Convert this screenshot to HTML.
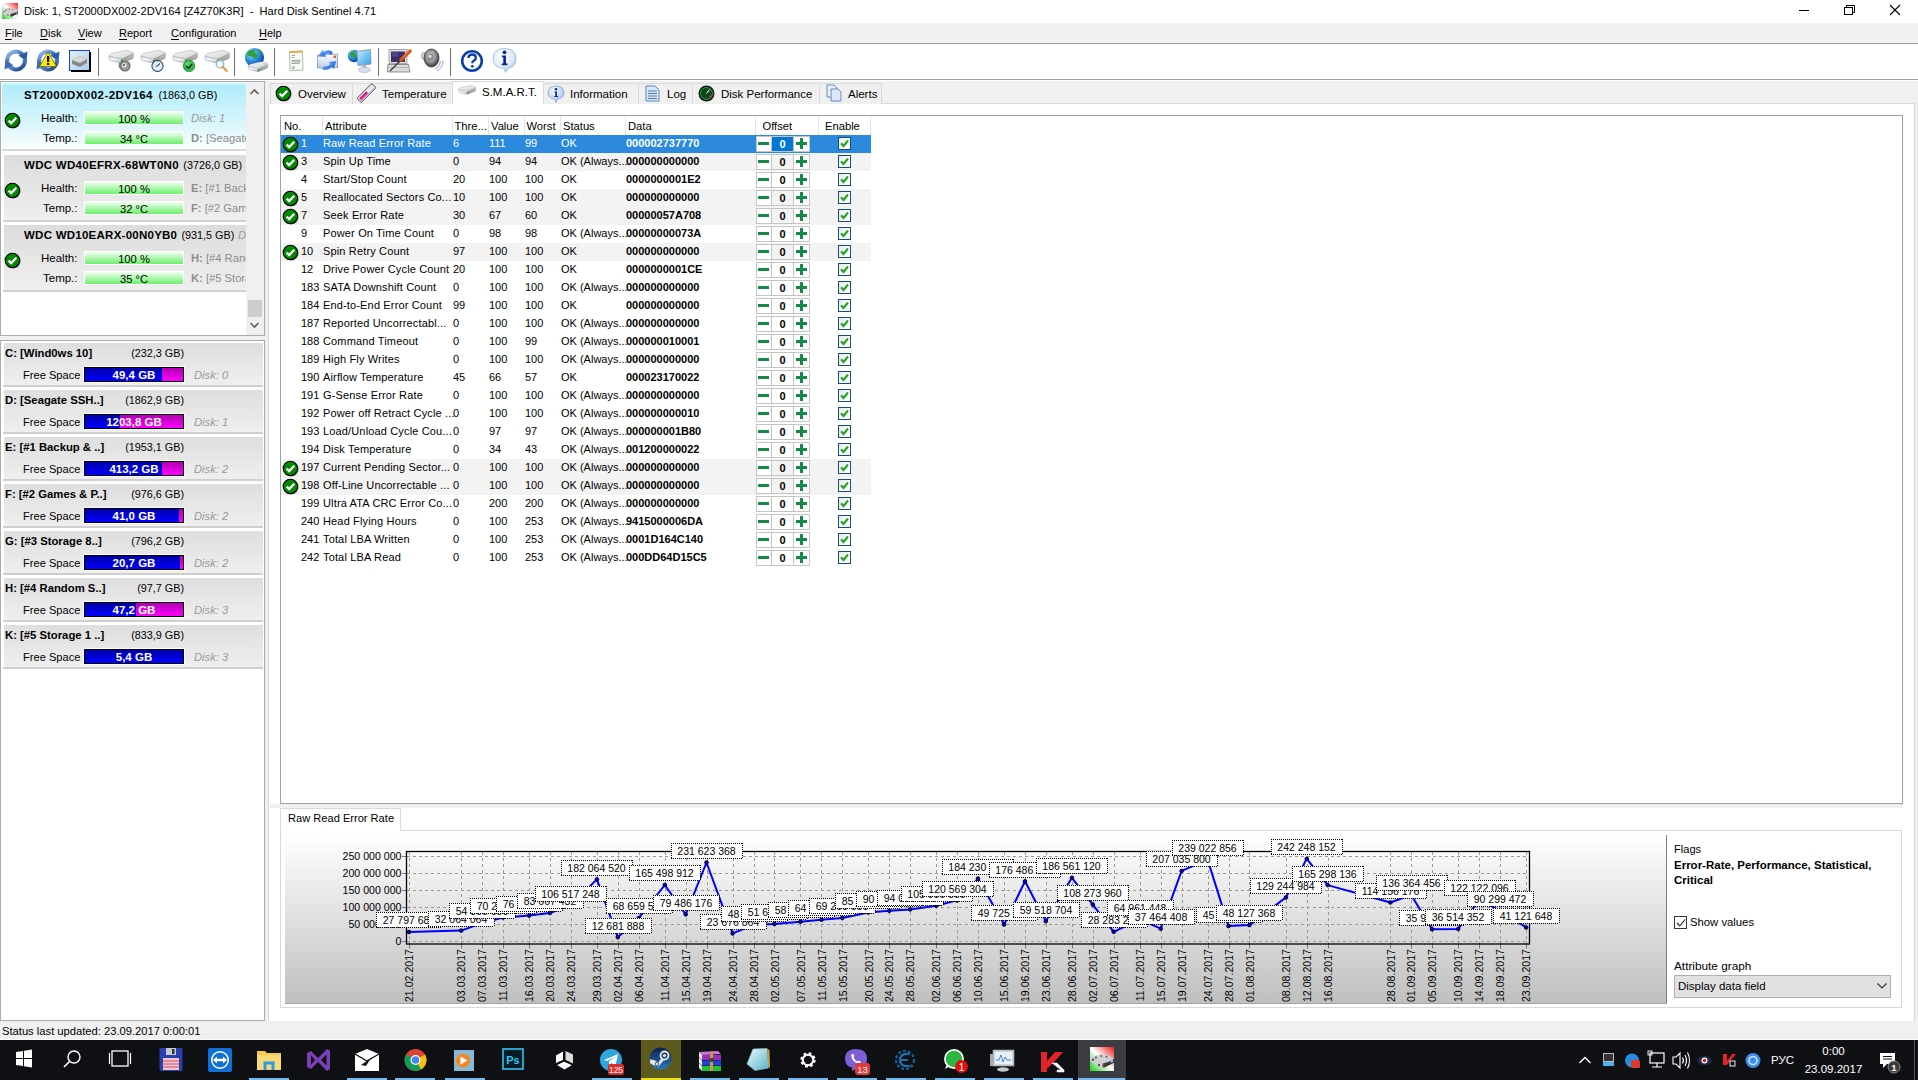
<!DOCTYPE html><html><head><meta charset="utf-8"><style>
html,body{margin:0;padding:0;width:1918px;height:1080px;overflow:hidden;background:#f0f0f0;font-family:'Liberation Sans', sans-serif;}
.t{position:absolute;white-space:pre;font-family:'Liberation Sans', sans-serif;}
.a{position:absolute;}
u{text-decoration:underline;text-underline-offset:2px}

</style></head><body>
<div style="position:absolute;left:0px;top:0px;width:1918px;height:23px;background:#fff"></div>
<svg class="a" style="left:2px;top:3px" width="16" height="16" viewBox="0 0 16 16">
<defs><linearGradient id="appg" x1="1" y1="0" x2="0" y2="1"><stop offset="0" stop-color="#f02020"/><stop offset="0.5" stop-color="#ffffff"/><stop offset="1" stop-color="#20d020"/></linearGradient></defs>
<rect x="0" y="0" width="16" height="16" fill="url(#appg)"/>
<path d="M0.5 7 L6 5 L12 5.5 L16 8 L16 10.5 L9 14 L6 13.5 L0.5 9.5 Z" fill="#d0d0d0"/><path d="M9 14 L16 10.5 L16 8 L12 10 L8.5 11 Z" fill="#3a3a3a"/><circle cx="14.5" cy="9.3" r="1" fill="#b0b0f0"/><g fill="#555"><circle cx="2" cy="8.5" r="0.8"/><circle cx="4" cy="7" r="0.7"/><circle cx="6" cy="12" r="0.8"/><circle cx="7.5" cy="6" r="0.6"/><circle cx="9" cy="12.5" r="0.9"/><circle cx="11" cy="6.5" r="0.6"/></g>
</svg>
<div class="t" style="left:24px;top:5px;font-size:11.1px;line-height:13px;font-weight:400;color:#000;">Disk: 1, ST2000DX002-2DV164 [Z4Z70K3R]  -  Hard Disk Sentinel 4.71</div>
<svg class="a" style="left:1790px;top:0" width="128" height="23">
<line x1="9" y1="10.5" x2="19" y2="10.5" stroke="#000" stroke-width="1"/>
<rect x="54.5" y="7.5" width="8" height="7" fill="none" stroke="#000"/>
<polyline points="56.5,7.5 56.5,5.5 64.5,5.5 64.5,12.5 62.5,12.5" fill="none" stroke="#000"/>
<line x1="100" y1="5" x2="110" y2="15" stroke="#000" stroke-width="1.1"/>
<line x1="110" y1="5" x2="100" y2="15" stroke="#000" stroke-width="1.1"/>
</svg>
<div style="position:absolute;left:0px;top:23px;width:1918px;height:20px;background:#f0f0f0"></div>
<div class="t" style="left:5px;top:27px;font-size:11px;line-height:13px;font-weight:400;color:#000;"><u>F</u>ile</div>
<div class="t" style="left:40px;top:27px;font-size:11px;line-height:13px;font-weight:400;color:#000;"><u>D</u>isk</div>
<div class="t" style="left:78px;top:27px;font-size:11px;line-height:13px;font-weight:400;color:#000;"><u>V</u>iew</div>
<div class="t" style="left:119px;top:27px;font-size:11px;line-height:13px;font-weight:400;color:#000;"><u>R</u>eport</div>
<div class="t" style="left:171px;top:27px;font-size:11px;line-height:13px;font-weight:400;color:#000;"><u>C</u>onfiguration</div>
<div class="t" style="left:259px;top:27px;font-size:11px;line-height:13px;font-weight:400;color:#000;"><u>H</u>elp</div>
<div style="position:absolute;left:0px;top:43px;width:1918px;height:1px;background:#a0a0a0"></div>
<div style="position:absolute;left:0px;top:44px;width:1918px;height:35px;background:#fff"></div>
<div style="position:absolute;left:0px;top:79px;width:1918px;height:1px;background:#a0a0a0"></div>
<div style="position:absolute;left:0px;top:80px;width:1918px;height:1px;background:#fff"></div>
<div style="position:absolute;left:98px;top:48px;width:1px;height:28px;background:#6e6e6e"></div>
<div style="position:absolute;left:234px;top:48px;width:1px;height:28px;background:#6e6e6e"></div>
<div style="position:absolute;left:274px;top:48px;width:1px;height:28px;background:#6e6e6e"></div>
<div style="position:absolute;left:378px;top:48px;width:1px;height:28px;background:#6e6e6e"></div>
<div style="position:absolute;left:450px;top:48px;width:1px;height:28px;background:#6e6e6e"></div>
<svg class="a" style="left:3px;top:47px" width="26" height="27" viewBox="0 0 26 27">
<defs><linearGradient id="rg16" x1="0" y1="0" x2="1" y2="1"><stop offset="0" stop-color="#a9c8ee"/><stop offset="0.5" stop-color="#4a7cc4"/><stop offset="1" stop-color="#163f86"/></linearGradient></defs>
<path d="M4.3 15 A8.8 8.8 0 0 1 19.5 7.5" fill="none" stroke="url(#rg16)" stroke-width="4.2"/>
<path d="M15.5 8.5 L24.5 4.5 L23.5 14.5 Z" fill="#2c5ea8"/>
<path d="M21.7 12 A8.8 8.8 0 0 1 6.5 19.5" fill="none" stroke="url(#rg16)" stroke-width="4.2"/>
<path d="M10.5 18.5 L1.5 22.5 L2.5 12.5 Z" fill="#3a6cb4"/>

</svg>
<svg class="a" style="left:35px;top:47px" width="26" height="27" viewBox="0 0 26 27">
<defs><linearGradient id="rg48" x1="0" y1="0" x2="1" y2="1"><stop offset="0" stop-color="#a9c8ee"/><stop offset="0.5" stop-color="#4a7cc4"/><stop offset="1" stop-color="#163f86"/></linearGradient></defs>
<path d="M4.3 15 A8.8 8.8 0 0 1 19.5 7.5" fill="none" stroke="url(#rg48)" stroke-width="4.2"/>
<path d="M15.5 8.5 L24.5 4.5 L23.5 14.5 Z" fill="#2c5ea8"/>
<path d="M21.7 12 A8.8 8.8 0 0 1 6.5 19.5" fill="none" stroke="url(#rg48)" stroke-width="4.2"/>
<path d="M10.5 18.5 L1.5 22.5 L2.5 12.5 Z" fill="#3a6cb4"/>
<path d="M13 5 L21.5 19.5 L4.5 19.5 Z" fill="#ffee00" stroke="#6a6a00" stroke-width="0.8"/><rect x="12" y="9" width="2.2" height="6" fill="#000"/><rect x="12" y="16" width="2.2" height="2" fill="#000"/>
</svg>
<svg class="a" style="left:69px;top:50px" width="23" height="23" viewBox="0 0 23 23">
<defs><linearGradient id="bb" x1="0" y1="0" x2="1" y2="1"><stop offset="0" stop-color="#e4f1fb"/><stop offset="1" stop-color="#a9cdec"/></linearGradient></defs>
<rect x="0.5" y="0.5" width="20" height="20" fill="url(#bb)" stroke="#1c3fe0" stroke-width="1"/>
<rect x="2" y="20" width="20" height="2" fill="#000"/><rect x="20" y="2" width="2" height="20" fill="#000"/>
<path d="M3 10 L10 6 L18 9 L18 13 L11 17 L3 14 Z" fill="#8a8a8a"/><path d="M3 10 L10 6 L18 9 L11 13 Z" fill="#d8d8d8"/>
</svg>
<svg class="a" style="left:0;top:0" width="0" height="0"><defs>
<linearGradient id="hddtop" x1="0" y1="0" x2="1" y2="1"><stop offset="0" stop-color="#fafafa"/><stop offset="1" stop-color="#cfcfcf"/></linearGradient>
<linearGradient id="hddfront" x1="0" y1="0" x2="0" y2="1"><stop offset="0" stop-color="#d8dae8"/><stop offset="0.5" stop-color="#f4f6ff"/><stop offset="1" stop-color="#a9abb8"/></linearGradient>
<linearGradient id="hddside" x1="0" y1="0" x2="0" y2="1"><stop offset="0" stop-color="#cfcfcf"/><stop offset="1" stop-color="#8c8c8c"/></linearGradient>
<radialGradient id="globeg" cx="0.35" cy="0.3" r="0.75"><stop offset="0" stop-color="#8fe0ff"/><stop offset="0.6" stop-color="#1f7fd8"/><stop offset="1" stop-color="#0a3f98"/></radialGradient>
</defs></svg>
<svg class="a" style="left:107px;top:47px" width="27" height="27" viewBox="0 0 27 27">
<g transform="translate(1 2) scale(1.0)"><path d="M1 7 Q1 5.5 3.5 4.8 L15 1.8 Q18 1.2 21 2 L24.5 3.5 Q25.5 4.3 24.5 5.2 L14.5 9.8 Q13 10.4 11 9.9 L2 7.6 Z" fill="url(#hddtop)" stroke="#9a9a9a" stroke-width="0.5"/><path d="M1 7 L11 9.9 Q13 10.4 14.5 9.8 L14.5 13.6 Q13 14.2 11 13.6 L2.2 11.2 Q1 10.6 1 9.6 Z" fill="url(#hddfront)" stroke="#9a9a9a" stroke-width="0.5"/><path d="M14.5 9.8 L24.5 5.2 Q25.5 4.5 25.3 4 L25.3 8.4 Q25.3 9.2 24.3 9.7 L14.5 13.6 Z" fill="url(#hddside)" stroke="#8a8a8a" stroke-width="0.5"/><rect x="12.8" y="10.6" width="1.6" height="2.6" fill="#16a016"/></g>
<circle cx="18" cy="19" r="5.6" fill="#6a6a6a"/><circle cx="18" cy="19" r="4.4" fill="#9a9a9a"/><circle cx="17.3" cy="18.3" r="2.2" fill="#e8e8e8"/><circle cx="17" cy="18" r="1" fill="#444"/><path d="M12.6 16 Q11.5 18.5 13 21" fill="none" stroke="#5a5ab0" stroke-width="1"/>
</svg>
<svg class="a" style="left:139px;top:47px" width="27" height="27" viewBox="0 0 27 27">
<g transform="translate(1 2) scale(1.0)"><path d="M1 7 Q1 5.5 3.5 4.8 L15 1.8 Q18 1.2 21 2 L24.5 3.5 Q25.5 4.3 24.5 5.2 L14.5 9.8 Q13 10.4 11 9.9 L2 7.6 Z" fill="url(#hddtop)" stroke="#9a9a9a" stroke-width="0.5"/><path d="M1 7 L11 9.9 Q13 10.4 14.5 9.8 L14.5 13.6 Q13 14.2 11 13.6 L2.2 11.2 Q1 10.6 1 9.6 Z" fill="url(#hddfront)" stroke="#9a9a9a" stroke-width="0.5"/><path d="M14.5 9.8 L24.5 5.2 Q25.5 4.5 25.3 4 L25.3 8.4 Q25.3 9.2 24.3 9.7 L14.5 13.6 Z" fill="url(#hddside)" stroke="#8a8a8a" stroke-width="0.5"/><rect x="12.8" y="10.6" width="1.6" height="2.6" fill="#16a016"/></g>
<circle cx="18.5" cy="19" r="5.6" fill="#dff2fb" stroke="#3a4a6a" stroke-width="1.1"/><g fill="#e08050"><rect x="18.2" y="14.2" width="0.8" height="1"/><rect x="22.4" y="18.6" width="1" height="0.8"/><rect x="13.6" y="18.6" width="1" height="0.8"/></g><path d="M18.5 19 L21 16.3" stroke="#2a2a5a" stroke-width="1.1"/><path d="M18.5 19 L16.8 19.6" stroke="#2a2a5a" stroke-width="0.9"/>
</svg>
<svg class="a" style="left:171px;top:47px" width="27" height="27" viewBox="0 0 27 27">
<g transform="translate(1 2) scale(1.0)"><path d="M1 7 Q1 5.5 3.5 4.8 L15 1.8 Q18 1.2 21 2 L24.5 3.5 Q25.5 4.3 24.5 5.2 L14.5 9.8 Q13 10.4 11 9.9 L2 7.6 Z" fill="url(#hddtop)" stroke="#9a9a9a" stroke-width="0.5"/><path d="M1 7 L11 9.9 Q13 10.4 14.5 9.8 L14.5 13.6 Q13 14.2 11 13.6 L2.2 11.2 Q1 10.6 1 9.6 Z" fill="url(#hddfront)" stroke="#9a9a9a" stroke-width="0.5"/><path d="M14.5 9.8 L24.5 5.2 Q25.5 4.5 25.3 4 L25.3 8.4 Q25.3 9.2 24.3 9.7 L14.5 13.6 Z" fill="url(#hddside)" stroke="#8a8a8a" stroke-width="0.5"/><rect x="12.8" y="10.6" width="1.6" height="2.6" fill="#16a016"/></g>
<circle cx="18" cy="19" r="5.8" fill="#2fb845" stroke="#1a7a2a" stroke-width="0.6"/><circle cx="17" cy="17.2" r="3" fill="#6fe07f" opacity="0.6"/><path d="M15.2 19 L17.4 21.2 L21 17" fill="none" stroke="#1c2a1c" stroke-width="1.5"/>
</svg>
<svg class="a" style="left:203px;top:47px" width="27" height="27" viewBox="0 0 27 27">
<g transform="translate(1 2) scale(1.0)"><path d="M1 7 Q1 5.5 3.5 4.8 L15 1.8 Q18 1.2 21 2 L24.5 3.5 Q25.5 4.3 24.5 5.2 L14.5 9.8 Q13 10.4 11 9.9 L2 7.6 Z" fill="url(#hddtop)" stroke="#9a9a9a" stroke-width="0.5"/><path d="M1 7 L11 9.9 Q13 10.4 14.5 9.8 L14.5 13.6 Q13 14.2 11 13.6 L2.2 11.2 Q1 10.6 1 9.6 Z" fill="url(#hddfront)" stroke="#9a9a9a" stroke-width="0.5"/><path d="M14.5 9.8 L24.5 5.2 Q25.5 4.5 25.3 4 L25.3 8.4 Q25.3 9.2 24.3 9.7 L14.5 13.6 Z" fill="url(#hddside)" stroke="#8a8a8a" stroke-width="0.5"/><rect x="12.8" y="10.6" width="1.6" height="2.6" fill="#16a016"/></g>
<circle cx="17" cy="17.2" r="3.8" fill="#e6f6ff" stroke="#8ab4d4" stroke-width="1.2"/><circle cx="16.2" cy="16.4" r="1.5" fill="#fff"/><line x1="19.6" y1="19.8" x2="23.8" y2="24" stroke="#e39a3a" stroke-width="2.2" stroke-linecap="round"/>
</svg>
<svg class="a" style="left:242px;top:47px" width="28" height="27" viewBox="0 0 28 27">
<circle cx="12.5" cy="10.5" r="9.6" fill="url(#globeg)"/>
<path d="M6 4.5 Q9.5 1.8 13 3 Q12 6 15 7 Q17 8.5 14.5 11 Q12 12.5 10.5 10 Q8 8.5 5.5 9 Q4.5 6.5 6 4.5 Z" fill="#2ea040"/>
<path d="M16 2.2 Q20 3.5 21.5 7.5 Q19.5 8 18.5 6 Q17 4.5 16 2.2 Z" fill="#2ea040"/>
<path d="M3.5 12 Q5.5 13 6 16 Q4.5 15 3.5 12 Z" fill="#2ea040"/>
<g transform="translate(5.5 13.5) scale(0.8)"><path d="M1 7 Q1 5.5 3.5 4.8 L15 1.8 Q18 1.2 21 2 L24.5 3.5 Q25.5 4.3 24.5 5.2 L14.5 9.8 Q13 10.4 11 9.9 L2 7.6 Z" fill="url(#hddtop)" stroke="#9a9a9a" stroke-width="0.5"/><path d="M1 7 L11 9.9 Q13 10.4 14.5 9.8 L14.5 13.6 Q13 14.2 11 13.6 L2.2 11.2 Q1 10.6 1 9.6 Z" fill="url(#hddfront)" stroke="#9a9a9a" stroke-width="0.5"/><path d="M14.5 9.8 L24.5 5.2 Q25.5 4.5 25.3 4 L25.3 8.4 Q25.3 9.2 24.3 9.7 L14.5 13.6 Z" fill="url(#hddside)" stroke="#8a8a8a" stroke-width="0.5"/><rect x="12.8" y="10.6" width="1.6" height="2.6" fill="#16a016"/></g>
</svg>
<svg class="a" style="left:287px;top:49px" width="18" height="24" viewBox="0 0 18 24">
<path d="M2.5 3 L15.5 2.5 L16 21 L3 21.8 Z" fill="#fdfdf8" stroke="#8ab0a0" stroke-width="0.8"/>
<path d="M2.3 2 L15.8 1.5 L15.8 3.6 L2.3 4 Z" fill="#c8a040"/>
<g fill="#e8d080"><circle cx="4" cy="2.7" r="0.7"/><circle cx="6.5" cy="2.6" r="0.7"/><circle cx="9" cy="2.5" r="0.7"/><circle cx="11.5" cy="2.4" r="0.7"/><circle cx="14" cy="2.3" r="0.7"/></g>
<g stroke="#8a8a8a" stroke-width="0.8"><line x1="4.5" y1="6.5" x2="8" y2="6.4"/><line x1="4.5" y1="8.5" x2="7.5" y2="8.4"/><line x1="4.5" y1="11.5" x2="13.5" y2="11.2"/><line x1="4.5" y1="13" x2="13.5" y2="12.7"/><line x1="4.5" y1="14.5" x2="13" y2="14.2"/><line x1="4.5" y1="18" x2="8" y2="17.9"/><line x1="4.5" y1="19.5" x2="8" y2="19.4"/></g>
</svg>
<svg class="a" style="left:315px;top:48px" width="26" height="24" viewBox="0 0 26 24">
<defs><linearGradient id="envg" x1="0" y1="0" x2="0" y2="1"><stop offset="0" stop-color="#ffffff"/><stop offset="1" stop-color="#b8cde8"/></linearGradient>
<linearGradient id="arrg" x1="0" y1="0" x2="1" y2="1"><stop offset="0" stop-color="#7ab8ff"/><stop offset="1" stop-color="#0a50d8"/></linearGradient></defs>
<path d="M2.5 7 L22.5 6 L22.5 19.5 L2.5 20 Z" fill="url(#envg)" stroke="#7088b0" stroke-width="0.7"/>
<rect x="18.5" y="7.5" width="2.6" height="2.6" fill="#e0603a"/>
<path d="M18 4.5 Q14 0.5 9 4 L8 1.5 L3 8.5 L11 8.8 L10 6.5 Q13.5 4.5 16 7 Z" fill="url(#arrg)"/>
<path d="M7 21 Q12 24 17 18.5 L18.5 21 L21.5 13 L14 14 L15.5 16.2 Q12 19.5 9 18.2 Z" fill="url(#arrg)"/>
</svg>
<svg class="a" style="left:347px;top:48px" width="27" height="26" viewBox="0 0 27 26">
<circle cx="7" cy="8" r="6.2" fill="url(#globeg)"/>
<path d="M3 5 Q5.5 2.5 8 3.5 Q7.5 6 9.5 7 Q10 9 8 10 Q6 9 4.5 9.5 Q2.5 7.5 3 5 Z" fill="#2ea040"/>
<defs><linearGradient id="scrg" x1="0" y1="0" x2="1" y2="1"><stop offset="0" stop-color="#c8f0ff"/><stop offset="1" stop-color="#2aa0e8"/></linearGradient></defs>
<path d="M10 3.5 L23.5 1.5 L24 16 L11 17.5 Z" fill="url(#scrg)" stroke="#8890b8" stroke-width="0.9"/>
<path d="M15.5 17 L19 16.6 L19.5 20 L15.5 20.3 Z" fill="#b0b0d0"/>
<ellipse cx="17.5" cy="21.8" rx="6" ry="2.8" fill="#d8dcef" stroke="#a8acc8" stroke-width="0.6"/>
</svg>
<svg class="a" style="left:387px;top:48px" width="26" height="26" viewBox="0 0 26 26">
<rect x="2" y="1.5" width="18" height="14" fill="#e0e0e0" stroke="#888" stroke-width="0.7"/>
<rect x="4" y="3.5" width="14" height="10.5" fill="#3d2f6a"/>
<rect x="5" y="4.5" width="6" height="4" fill="#6a5aa0" opacity="0.6"/>
<path d="M1 16.5 L21.5 16.5 L23 24 L0.5 24 Z" fill="#dcdcdc" stroke="#666" stroke-width="0.7"/>
<line x1="2" y1="19.5" x2="21" y2="19.5" stroke="#999" stroke-width="0.6"/>
<line x1="3" y1="23" x2="14" y2="12" stroke="#333" stroke-width="1.3"/>
<line x1="14" y1="12" x2="23" y2="3" stroke="#d2561c" stroke-width="3.4" stroke-linecap="round"/>
<line x1="16" y1="9" x2="22" y2="3" stroke="#f08a50" stroke-width="1" />
</svg>
<svg class="a" style="left:420px;top:48px" width="24" height="24" viewBox="0 0 24 24">
<defs><radialGradient id="spk" cx="0.45" cy="0.4" r="0.6"><stop offset="0" stop-color="#e0e0e0"/><stop offset="0.5" stop-color="#9a9a9a"/><stop offset="1" stop-color="#3a3a3a"/></radialGradient></defs>
<ellipse cx="4" cy="8" rx="2.5" ry="3.5" fill="#dadaf0" stroke="#8080b8" stroke-width="0.7"/>
<ellipse cx="11.5" cy="10" rx="7.5" ry="9" fill="url(#spk)" stroke="#333" stroke-width="0.8"/>
<ellipse cx="10.5" cy="9" rx="3" ry="3.6" fill="#8a8a8a"/><ellipse cx="10" cy="8.3" rx="1.6" ry="1.9" fill="#d8d8d8"/>
<path d="M15 21 Q20 18 20.5 13" fill="none" stroke="#a8a8e0" stroke-width="1.2"/>
<path d="M16.5 23 Q23 20 23 12.5" fill="none" stroke="#b8b8e8" stroke-width="1.2"/>
</svg>
<svg class="a" style="left:460px;top:49px" width="24" height="24" viewBox="0 0 24 24">
<circle cx="12" cy="12" r="9.8" fill="#fff" stroke="#0b3fae" stroke-width="2.6"/>
<path d="M8.5 9 Q8.5 5.5 12.2 5.5 Q15.8 5.5 15.8 8.7 Q15.8 10.8 13.3 12 Q12.3 12.6 12.3 14.3" fill="none" stroke="#0b3fae" stroke-width="2.3"/>
<circle cx="12.3" cy="17.3" r="1.4" fill="#0b3fae"/>
</svg>
<svg class="a" style="left:491px;top:47px" width="27" height="27" viewBox="0 0 27 27">
<defs><radialGradient id="ib" cx="0.4" cy="0.3" r="0.8"><stop offset="0" stop-color="#ffffff"/><stop offset="0.6" stop-color="#dfeaf8"/><stop offset="1" stop-color="#8ab0e0"/></radialGradient></defs>
<path d="M13.5 1.5 Q25 1.5 25 12 Q25 20 17 21.5 L14.5 25.5 L13 21.5 Q2 20.5 2 12 Q2 1.5 13.5 1.5 Z" fill="url(#ib)" stroke="#9ab8dc" stroke-width="0.8"/>
<circle cx="13.5" cy="5.3" r="1.9" fill="#0a2a90"/>
<path d="M10.8 8.5 L15 8.5 L15 16.5 L16.5 16.5 L16.5 18.3 L10.8 18.3 L10.8 16.5 L12.3 16.5 L12.3 10.3 L10.8 10.3 Z" fill="#0a2a90"/>
</svg>
<div style="position:absolute;left:0px;top:1021px;width:1918px;height:19px;background:#f0f0f0"></div>
<div class="t" style="left:2px;top:1025px;font-size:11.2px;line-height:13px;font-weight:400;color:#000;">Status last updated: 23.09.2017 0:00:01</div>
<div style="position:absolute;left:0px;top:81px;width:265px;height:255px;background:#fff;box-sizing:border-box;border:1px solid #a9abb0"></div>
<div style="position:absolute;left:2px;top:83px;width:244px;height:68px;background:linear-gradient(#c8fbff 0px,#b2ecfb 3px,#def7fd 45px,#ffffff 68px)"></div>
<div style="position:absolute;left:2px;top:149px;width:244px;height:2px;background:#d8d8d8"></div>
<div class="a" style="left:2px;top:83px;width:244px;height:68px;overflow:hidden">
<div class="t" style="left:22px;top:6px;font-size:11.2px;line-height:13px;font-weight:400;color:#000;"><b style="letter-spacing:0.45px;font-size:11.5px">ST2000DX002-2DV164</b></div>
<div class="t" style="left:156.5px;top:6px;font-size:10.8px;line-height:13px;font-weight:400;color:#000;">(1863,0 GB)</div>
<div class="t" style="left:39px;top:29px;font-size:11.5px;line-height:13px;font-weight:400;color:#000;">Health:</div>
<div class="t" style="left:41px;top:49px;font-size:11.5px;line-height:13px;font-weight:400;color:#000;">Temp.:</div>
<div class="t" style="left:189px;top:29px;font-size:11.2px;line-height:13px;font-weight:400;color:#8c8c8c;"><i style="color:#9a9a9a">Disk: 1</i></div>
<div class="t" style="left:189px;top:49px;font-size:11.2px;line-height:13px;font-weight:400;color:#8c8c8c;"><b>D:</b> [Seagate SSH</div>
</div>
<div style="position:absolute;left:84px;top:111px;width:100px;height:14px;background:#fff"></div>
<div style="position:absolute;left:85px;top:112px;width:98px;height:12px;background:linear-gradient(#f2fff2,#6df06d)"></div>
<div class="t" style="left:84px;top:113px;font-size:11.2px;line-height:13px;font-weight:400;color:#000;width:100px;text-align:center">100 %</div>
<div style="position:absolute;left:84px;top:131px;width:100px;height:14px;background:#fff"></div>
<div style="position:absolute;left:85px;top:132px;width:98px;height:12px;background:linear-gradient(#f2fff2,#6df06d)"></div>
<div class="t" style="left:84px;top:133px;font-size:11.2px;line-height:13px;font-weight:400;color:#000;width:100px;text-align:center">34 °C</div>
<svg class="a" style="left:2.9000000000000004px;top:110.7px" width="19" height="19" viewBox="0 0 19 19">
<circle cx="10.4" cy="10.4" r="7.2" fill="#3a3a3a" opacity="0.55"/>
<circle cx="9.4" cy="9.4" r="7.2" fill="#008a00" stroke="#000" stroke-width="1.1"/>
<path d="M5.6 9.6 L8.2 12.1 L13.3 6.8" fill="none" stroke="#fff" stroke-width="2.3" stroke-linejoin="miter" stroke-linecap="butt"/>
</svg>
<div style="position:absolute;left:4px;top:155px;width:242px;height:65px;background:linear-gradient(#dcdcdc,#efefef)"></div>
<div style="position:absolute;left:3px;top:220px;width:243px;height:2px;background:#d0d0d0"></div>
<div class="a" style="left:2px;top:153px;width:244px;height:68px;overflow:hidden">
<div class="t" style="left:22px;top:6px;font-size:11.2px;line-height:13px;font-weight:400;color:#000;"><b style="letter-spacing:0.3px;font-size:11.5px">WDC WD40EFRX-68WT0N0</b></div>
<div class="t" style="left:181.3px;top:6px;font-size:10.8px;line-height:13px;font-weight:400;color:#000;">(3726,0 GB)</div>
<div class="t" style="left:39px;top:29px;font-size:11.5px;line-height:13px;font-weight:400;color:#000;">Health:</div>
<div class="t" style="left:41px;top:49px;font-size:11.5px;line-height:13px;font-weight:400;color:#000;">Temp.:</div>
<div class="t" style="left:189px;top:29px;font-size:11.2px;line-height:13px;font-weight:400;color:#8c8c8c;"><b>E:</b> [#1 Backup</div>
<div class="t" style="left:189px;top:49px;font-size:11.2px;line-height:13px;font-weight:400;color:#8c8c8c;"><b>F:</b> [#2 Games</div>
</div>
<div style="position:absolute;left:84px;top:181px;width:100px;height:14px;background:#fff"></div>
<div style="position:absolute;left:85px;top:182px;width:98px;height:12px;background:linear-gradient(#f2fff2,#6df06d)"></div>
<div class="t" style="left:84px;top:183px;font-size:11.2px;line-height:13px;font-weight:400;color:#000;width:100px;text-align:center">100 %</div>
<div style="position:absolute;left:84px;top:201px;width:100px;height:14px;background:#fff"></div>
<div style="position:absolute;left:85px;top:202px;width:98px;height:12px;background:linear-gradient(#f2fff2,#6df06d)"></div>
<div class="t" style="left:84px;top:203px;font-size:11.2px;line-height:13px;font-weight:400;color:#000;width:100px;text-align:center">32 °C</div>
<svg class="a" style="left:2.9000000000000004px;top:180.7px" width="19" height="19" viewBox="0 0 19 19">
<circle cx="10.4" cy="10.4" r="7.2" fill="#3a3a3a" opacity="0.55"/>
<circle cx="9.4" cy="9.4" r="7.2" fill="#008a00" stroke="#000" stroke-width="1.1"/>
<path d="M5.6 9.6 L8.2 12.1 L13.3 6.8" fill="none" stroke="#fff" stroke-width="2.3" stroke-linejoin="miter" stroke-linecap="butt"/>
</svg>
<div style="position:absolute;left:4px;top:225px;width:242px;height:65px;background:linear-gradient(#dcdcdc,#efefef)"></div>
<div style="position:absolute;left:3px;top:290px;width:243px;height:2px;background:#d0d0d0"></div>
<div class="a" style="left:2px;top:223px;width:244px;height:68px;overflow:hidden">
<div class="t" style="left:22px;top:6px;font-size:11.2px;line-height:13px;font-weight:400;color:#000;"><b style="letter-spacing:0.25px;font-size:11.5px">WDC WD10EARX-00N0YB0</b></div>
<div class="t" style="left:179.5px;top:6px;font-size:10.8px;line-height:13px;font-weight:400;color:#000;">(931,5 GB)</div>
<div class="t" style="left:236px;top:6px;font-size:11.2px;line-height:13px;font-weight:400;color:#9a9a9a;"><i>Disk: 3</i></div>
<div class="t" style="left:39px;top:29px;font-size:11.5px;line-height:13px;font-weight:400;color:#000;">Health:</div>
<div class="t" style="left:41px;top:49px;font-size:11.5px;line-height:13px;font-weight:400;color:#000;">Temp.:</div>
<div class="t" style="left:189px;top:29px;font-size:11.2px;line-height:13px;font-weight:400;color:#8c8c8c;"><b>H:</b> [#4 Random</div>
<div class="t" style="left:189px;top:49px;font-size:11.2px;line-height:13px;font-weight:400;color:#8c8c8c;"><b>K:</b> [#5 Storage</div>
</div>
<div style="position:absolute;left:84px;top:251px;width:100px;height:14px;background:#fff"></div>
<div style="position:absolute;left:85px;top:252px;width:98px;height:12px;background:linear-gradient(#f2fff2,#6df06d)"></div>
<div class="t" style="left:84px;top:253px;font-size:11.2px;line-height:13px;font-weight:400;color:#000;width:100px;text-align:center">100 %</div>
<div style="position:absolute;left:84px;top:271px;width:100px;height:14px;background:#fff"></div>
<div style="position:absolute;left:85px;top:272px;width:98px;height:12px;background:linear-gradient(#f2fff2,#6df06d)"></div>
<div class="t" style="left:84px;top:273px;font-size:11.2px;line-height:13px;font-weight:400;color:#000;width:100px;text-align:center">35 °C</div>
<svg class="a" style="left:2.9000000000000004px;top:250.7px" width="19" height="19" viewBox="0 0 19 19">
<circle cx="10.4" cy="10.4" r="7.2" fill="#3a3a3a" opacity="0.55"/>
<circle cx="9.4" cy="9.4" r="7.2" fill="#008a00" stroke="#000" stroke-width="1.1"/>
<path d="M5.6 9.6 L8.2 12.1 L13.3 6.8" fill="none" stroke="#fff" stroke-width="2.3" stroke-linejoin="miter" stroke-linecap="butt"/>
</svg>
<div style="position:absolute;left:246px;top:82px;width:18px;height:253px;background:#f0f0f0"></div>
<svg class="a" style="left:246px;top:82px" width="18" height="253">
<polyline points="4.5,12 8.5,8 12.5,12" fill="none" stroke="#606060" stroke-width="1.6"/>
<polyline points="4.5,241 8.5,245 12.5,241" fill="none" stroke="#606060" stroke-width="1.6"/>
</svg>
<div style="position:absolute;left:248px;top:300px;width:14px;height:17px;background:#cdcdcd"></div>
<div style="position:absolute;left:0px;top:340px;width:265px;height:681px;background:#fff;box-sizing:border-box;border:1px solid #a9abb0"></div>
<div style="position:absolute;left:4px;top:343px;width:259px;height:42px;background:linear-gradient(#dedede,#efefef)"></div>
<div style="position:absolute;left:3px;top:385px;width:260px;height:2px;background:#cfcfcf"></div>
<div class="t" style="left:5px;top:347px;font-size:11.3px;line-height:13px;font-weight:700;color:#000;">C: [Wind0ws 10]</div>
<div class="t" style="left:84px;top:347px;font-size:10.8px;line-height:13px;font-weight:400;color:#000;width:100px;text-align:right">(232,3 GB)</div>
<div class="t" style="left:23px;top:369px;font-size:11.1px;line-height:13px;font-weight:400;color:#000;">Free Space</div>
<div style="position:absolute;left:83px;top:366px;width:102px;height:17px;background:#fbfbfb"></div>
<div style="position:absolute;left:84px;top:367px;width:100px;height:15px;background:#000"></div>
<div style="position:absolute;left:85px;top:368px;width:77px;height:13px;background:linear-gradient(#0000a8,#0000ff)"></div>
<div style="position:absolute;left:162px;top:368px;width:21px;height:13px;background:linear-gradient(#b000b0,#ff00ff)"></div>
<div class="t" style="left:84px;top:368px;font-size:11.5px;line-height:13px;font-weight:700;color:#fff;width:100px;text-align:center;line-height:14px">49,4 GB</div>
<div class="t" style="left:194px;top:369px;font-size:11.2px;line-height:13px;font-weight:400;color:#9a9a9a;"><i>Disk: 0</i></div>
<div style="position:absolute;left:4px;top:390px;width:259px;height:42px;background:linear-gradient(#dedede,#efefef)"></div>
<div style="position:absolute;left:3px;top:432px;width:260px;height:2px;background:#cfcfcf"></div>
<div class="t" style="left:5px;top:394px;font-size:11.3px;line-height:13px;font-weight:700;color:#000;">D: [Seagate SSH..]</div>
<div class="t" style="left:84px;top:394px;font-size:10.8px;line-height:13px;font-weight:400;color:#000;width:100px;text-align:right">(1862,9 GB)</div>
<div class="t" style="left:23px;top:416px;font-size:11.1px;line-height:13px;font-weight:400;color:#000;">Free Space</div>
<div style="position:absolute;left:83px;top:413px;width:102px;height:17px;background:#fbfbfb"></div>
<div style="position:absolute;left:84px;top:414px;width:100px;height:15px;background:#000"></div>
<div style="position:absolute;left:85px;top:415px;width:35px;height:13px;background:linear-gradient(#0000a8,#0000ff)"></div>
<div style="position:absolute;left:120px;top:415px;width:63px;height:13px;background:linear-gradient(#b000b0,#ff00ff)"></div>
<div class="t" style="left:84px;top:415px;font-size:11.5px;line-height:13px;font-weight:700;color:#fff;width:100px;text-align:center;line-height:14px">1203,8 GB</div>
<div class="t" style="left:194px;top:416px;font-size:11.2px;line-height:13px;font-weight:400;color:#9a9a9a;"><i>Disk: 1</i></div>
<div style="position:absolute;left:4px;top:437px;width:259px;height:42px;background:linear-gradient(#dedede,#efefef)"></div>
<div style="position:absolute;left:3px;top:479px;width:260px;height:2px;background:#cfcfcf"></div>
<div class="t" style="left:5px;top:441px;font-size:11.3px;line-height:13px;font-weight:700;color:#000;">E: [#1 Backup &amp; ..]</div>
<div class="t" style="left:84px;top:441px;font-size:10.8px;line-height:13px;font-weight:400;color:#000;width:100px;text-align:right">(1953,1 GB)</div>
<div class="t" style="left:23px;top:463px;font-size:11.1px;line-height:13px;font-weight:400;color:#000;">Free Space</div>
<div style="position:absolute;left:83px;top:460px;width:102px;height:17px;background:#fbfbfb"></div>
<div style="position:absolute;left:84px;top:461px;width:100px;height:15px;background:#000"></div>
<div style="position:absolute;left:85px;top:462px;width:77px;height:13px;background:linear-gradient(#0000a8,#0000ff)"></div>
<div style="position:absolute;left:162px;top:462px;width:21px;height:13px;background:linear-gradient(#b000b0,#ff00ff)"></div>
<div class="t" style="left:84px;top:462px;font-size:11.5px;line-height:13px;font-weight:700;color:#fff;width:100px;text-align:center;line-height:14px">413,2 GB</div>
<div class="t" style="left:194px;top:463px;font-size:11.2px;line-height:13px;font-weight:400;color:#9a9a9a;"><i>Disk: 2</i></div>
<div style="position:absolute;left:4px;top:484px;width:259px;height:42px;background:linear-gradient(#dedede,#efefef)"></div>
<div style="position:absolute;left:3px;top:526px;width:260px;height:2px;background:#cfcfcf"></div>
<div class="t" style="left:5px;top:488px;font-size:11.3px;line-height:13px;font-weight:700;color:#000;">F: [#2 Games &amp; P..]</div>
<div class="t" style="left:84px;top:488px;font-size:10.8px;line-height:13px;font-weight:400;color:#000;width:100px;text-align:right">(976,6 GB)</div>
<div class="t" style="left:23px;top:510px;font-size:11.1px;line-height:13px;font-weight:400;color:#000;">Free Space</div>
<div style="position:absolute;left:83px;top:507px;width:102px;height:17px;background:#fbfbfb"></div>
<div style="position:absolute;left:84px;top:508px;width:100px;height:15px;background:#000"></div>
<div style="position:absolute;left:85px;top:509px;width:94px;height:13px;background:linear-gradient(#0000a8,#0000ff)"></div>
<div style="position:absolute;left:179px;top:509px;width:4px;height:13px;background:linear-gradient(#b000b0,#ff00ff)"></div>
<div class="t" style="left:84px;top:509px;font-size:11.5px;line-height:13px;font-weight:700;color:#fff;width:100px;text-align:center;line-height:14px">41,0 GB</div>
<div class="t" style="left:194px;top:510px;font-size:11.2px;line-height:13px;font-weight:400;color:#9a9a9a;"><i>Disk: 2</i></div>
<div style="position:absolute;left:4px;top:531px;width:259px;height:42px;background:linear-gradient(#dedede,#efefef)"></div>
<div style="position:absolute;left:3px;top:573px;width:260px;height:2px;background:#cfcfcf"></div>
<div class="t" style="left:5px;top:535px;font-size:11.3px;line-height:13px;font-weight:700;color:#000;">G: [#3 Storage 8..]</div>
<div class="t" style="left:84px;top:535px;font-size:10.8px;line-height:13px;font-weight:400;color:#000;width:100px;text-align:right">(796,2 GB)</div>
<div class="t" style="left:23px;top:557px;font-size:11.1px;line-height:13px;font-weight:400;color:#000;">Free Space</div>
<div style="position:absolute;left:83px;top:554px;width:102px;height:17px;background:#fbfbfb"></div>
<div style="position:absolute;left:84px;top:555px;width:100px;height:15px;background:#000"></div>
<div style="position:absolute;left:85px;top:556px;width:95px;height:13px;background:linear-gradient(#0000a8,#0000ff)"></div>
<div style="position:absolute;left:180px;top:556px;width:3px;height:13px;background:linear-gradient(#b000b0,#ff00ff)"></div>
<div class="t" style="left:84px;top:556px;font-size:11.5px;line-height:13px;font-weight:700;color:#fff;width:100px;text-align:center;line-height:14px">20,7 GB</div>
<div class="t" style="left:194px;top:557px;font-size:11.2px;line-height:13px;font-weight:400;color:#9a9a9a;"><i>Disk: 2</i></div>
<div style="position:absolute;left:4px;top:578px;width:259px;height:42px;background:linear-gradient(#dedede,#efefef)"></div>
<div style="position:absolute;left:3px;top:620px;width:260px;height:2px;background:#cfcfcf"></div>
<div class="t" style="left:5px;top:582px;font-size:11.3px;line-height:13px;font-weight:700;color:#000;">H: [#4 Random S..]</div>
<div class="t" style="left:84px;top:582px;font-size:10.8px;line-height:13px;font-weight:400;color:#000;width:100px;text-align:right">(97,7 GB)</div>
<div class="t" style="left:23px;top:604px;font-size:11.1px;line-height:13px;font-weight:400;color:#000;">Free Space</div>
<div style="position:absolute;left:83px;top:601px;width:102px;height:17px;background:#fbfbfb"></div>
<div style="position:absolute;left:84px;top:602px;width:100px;height:15px;background:#000"></div>
<div style="position:absolute;left:85px;top:603px;width:51px;height:13px;background:linear-gradient(#0000a8,#0000ff)"></div>
<div style="position:absolute;left:136px;top:603px;width:47px;height:13px;background:linear-gradient(#b000b0,#ff00ff)"></div>
<div class="t" style="left:84px;top:603px;font-size:11.5px;line-height:13px;font-weight:700;color:#fff;width:100px;text-align:center;line-height:14px">47,2 GB</div>
<div class="t" style="left:194px;top:604px;font-size:11.2px;line-height:13px;font-weight:400;color:#9a9a9a;"><i>Disk: 3</i></div>
<div style="position:absolute;left:4px;top:625px;width:259px;height:42px;background:linear-gradient(#dedede,#efefef)"></div>
<div style="position:absolute;left:3px;top:667px;width:260px;height:2px;background:#cfcfcf"></div>
<div class="t" style="left:5px;top:629px;font-size:11.3px;line-height:13px;font-weight:700;color:#000;">K: [#5 Storage 1 ..]</div>
<div class="t" style="left:84px;top:629px;font-size:10.8px;line-height:13px;font-weight:400;color:#000;width:100px;text-align:right">(833,9 GB)</div>
<div class="t" style="left:23px;top:651px;font-size:11.1px;line-height:13px;font-weight:400;color:#000;">Free Space</div>
<div style="position:absolute;left:83px;top:648px;width:102px;height:17px;background:#fbfbfb"></div>
<div style="position:absolute;left:84px;top:649px;width:100px;height:15px;background:#000"></div>
<div style="position:absolute;left:85px;top:650px;width:98px;height:13px;background:linear-gradient(#0000a8,#0000ff)"></div>
<div style="position:absolute;left:183px;top:650px;width:0px;height:13px;background:linear-gradient(#b000b0,#ff00ff)"></div>
<div class="t" style="left:84px;top:650px;font-size:11.5px;line-height:13px;font-weight:700;color:#fff;width:100px;text-align:center;line-height:14px">5,4 GB</div>
<div class="t" style="left:194px;top:651px;font-size:11.2px;line-height:13px;font-weight:400;color:#9a9a9a;"><i>Disk: 3</i></div>
<div style="position:absolute;left:268px;top:103px;width:1647px;height:918px;background:#fff;box-sizing:border-box;border:1px solid #d9d9d9;border-bottom:none"></div>
<div style="position:absolute;left:270px;top:83px;width:83px;height:21px;background:#f0f0f0;box-sizing:border-box;border:1px solid #d9d9d9;border-bottom:none"></div>
<div class="t" style="left:298px;top:88px;font-size:11.5px;line-height:13px;font-weight:400;color:#000;">Overview</div>
<div style="position:absolute;left:352px;top:83px;width:101px;height:21px;background:#f0f0f0;box-sizing:border-box;border:1px solid #d9d9d9;border-bottom:none"></div>
<div class="t" style="left:382px;top:88px;font-size:11.5px;line-height:13px;font-weight:400;color:#000;">Temperature</div>
<div style="position:absolute;left:452px;top:81px;width:92px;height:23px;background:#fff;box-sizing:border-box;border:1px solid #d9d9d9;border-bottom:none"></div>
<div class="t" style="left:482px;top:86px;font-size:11.5px;line-height:13px;font-weight:400;color:#000;">S.M.A.R.T.</div>
<div style="position:absolute;left:543px;top:83px;width:96px;height:21px;background:#f0f0f0;box-sizing:border-box;border:1px solid #d9d9d9;border-bottom:none"></div>
<div class="t" style="left:570px;top:88px;font-size:11.5px;line-height:13px;font-weight:400;color:#000;">Information</div>
<div style="position:absolute;left:638px;top:83px;width:55px;height:21px;background:#f0f0f0;box-sizing:border-box;border:1px solid #d9d9d9;border-bottom:none"></div>
<div class="t" style="left:667px;top:88px;font-size:11.5px;line-height:13px;font-weight:400;color:#000;">Log</div>
<div style="position:absolute;left:692px;top:83px;width:128px;height:21px;background:#f0f0f0;box-sizing:border-box;border:1px solid #d9d9d9;border-bottom:none"></div>
<div class="t" style="left:721px;top:88px;font-size:11.5px;line-height:13px;font-weight:400;color:#000;">Disk Performance</div>
<div style="position:absolute;left:819px;top:83px;width:63px;height:21px;background:#f0f0f0;box-sizing:border-box;border:1px solid #d9d9d9;border-bottom:none"></div>
<div class="t" style="left:848px;top:88px;font-size:11.5px;line-height:13px;font-weight:400;color:#000;">Alerts</div>
<div style="position:absolute;left:453px;top:103px;width:90px;height:1px;background:#fff"></div>
<svg class="a" style="left:274.0px;top:83.5px" width="19" height="19" viewBox="0 0 19 19">
<circle cx="10.4" cy="10.4" r="7.2" fill="#3a3a3a" opacity="0.55"/>
<circle cx="9.4" cy="9.4" r="7.2" fill="#008a00" stroke="#000" stroke-width="1.1"/>
<path d="M5.6 9.6 L8.2 12.1 L13.3 6.8" fill="none" stroke="#fff" stroke-width="2.3" stroke-linejoin="miter" stroke-linecap="butt"/>
</svg>
<svg class="a" style="left:356px;top:83px" width="21" height="20" viewBox="0 0 21 20">
<g transform="rotate(-45 10.5 10)">
<rect x="0" y="7" width="21" height="6" rx="1.2" fill="#e8e8f0" stroke="#444" stroke-width="0.9"/>
<rect x="1.5" y="8.6" width="10" height="2.8" fill="#e0208a"/>
<line x1="1.5" y1="12" x2="19.5" y2="12" stroke="#9a9ad0" stroke-width="0.8"/>
</g></svg>
<svg class="a" style="left:458px;top:85px" width="20" height="13" viewBox="0 0 20 13"><g transform="translate(0 -0.5) scale(0.7)"><path d="M1 7 Q1 5.5 3.5 4.8 L15 1.8 Q18 1.2 21 2 L24.5 3.5 Q25.5 4.3 24.5 5.2 L14.5 9.8 Q13 10.4 11 9.9 L2 7.6 Z" fill="url(#hddtop)" stroke="#9a9a9a" stroke-width="0.5"/><path d="M1 7 L11 9.9 Q13 10.4 14.5 9.8 L14.5 13.6 Q13 14.2 11 13.6 L2.2 11.2 Q1 10.6 1 9.6 Z" fill="url(#hddfront)" stroke="#9a9a9a" stroke-width="0.5"/><path d="M14.5 9.8 L24.5 5.2 Q25.5 4.5 25.3 4 L25.3 8.4 Q25.3 9.2 24.3 9.7 L14.5 13.6 Z" fill="url(#hddside)" stroke="#8a8a8a" stroke-width="0.5"/><rect x="12.8" y="10.6" width="1.6" height="2.6" fill="#16a016"/></g></svg>
<svg class="a" style="left:547px;top:85px" width="18" height="18" viewBox="0 0 18 18">
<defs><radialGradient id="ib2" cx="0.4" cy="0.3" r="0.8"><stop offset="0" stop-color="#ffffff"/><stop offset="1" stop-color="#8ab4e8"/></radialGradient></defs>
<path d="M9 1 Q17 1 17 8 Q17 13 10.5 14 L9 17.5 L7.5 14 Q1 13 1 8 Q1 1 9 1 Z" fill="url(#ib2)" stroke="#7aa0d0" stroke-width="0.7"/>
<circle cx="9" cy="4.3" r="1.3" fill="#0a2a90"/><path d="M7.3 6.5 L10 6.5 L10 11 L11 11 L11 12 L7.3 12 L7.3 11 L8.3 11 L8.3 7.5 L7.3 7.5 Z" fill="#0a2a90"/>
</svg>
<svg class="a" style="left:645px;top:85px" width="15" height="17" viewBox="0 0 15 17">
<path d="M1 1 L10 1 L14 5 L14 16 L1 16 Z" fill="#dceaf8" stroke="#4a7ac0" stroke-width="0.9"/>
<g stroke="#3a6ac0" stroke-width="0.9"><line x1="3" y1="6" x2="12" y2="6"/><line x1="3" y1="8.5" x2="12" y2="8.5"/><line x1="3" y1="11" x2="12" y2="11"/><line x1="3" y1="13.5" x2="12" y2="13.5"/></g>
</svg>
<svg class="a" style="left:698px;top:85px" width="17" height="17" viewBox="0 0 17 17">
<circle cx="8.5" cy="8.5" r="8" fill="#1a1a1a"/><circle cx="8.5" cy="8.5" r="6" fill="#0a4a1a" stroke="#2ac040" stroke-width="0.8"/>
<line x1="8.5" y1="8.5" x2="11.5" y2="4.5" stroke="#fff" stroke-width="1"/><path d="M11 12 L14 10" stroke="#e02020" stroke-width="1.5"/>
</svg>
<svg class="a" style="left:826px;top:84px" width="16" height="18" viewBox="0 0 16 18">
<path d="M1 1 L8 1 L11 4 L11 13 L1 13 Z" fill="#e8f0fa" stroke="#5a80b8" stroke-width="0.9"/>
<path d="M5 5 L12 5 L15 8 L15 17 L5 17 Z" fill="#dce8f8" stroke="#5a80b8" stroke-width="0.9"/>
</svg>
<div style="position:absolute;left:280px;top:115px;width:1623px;height:689px;background:#fff;box-sizing:border-box;border:1px solid #a0a0a8"></div>
<div style="position:absolute;left:322px;top:116px;width:1px;height:19px;background:#e5e5e5"></div>
<div style="position:absolute;left:452px;top:116px;width:1px;height:19px;background:#e5e5e5"></div>
<div style="position:absolute;left:488px;top:116px;width:1px;height:19px;background:#e5e5e5"></div>
<div style="position:absolute;left:524px;top:116px;width:1px;height:19px;background:#e5e5e5"></div>
<div style="position:absolute;left:560px;top:116px;width:1px;height:19px;background:#e5e5e5"></div>
<div style="position:absolute;left:625px;top:116px;width:1px;height:19px;background:#e5e5e5"></div>
<div style="position:absolute;left:755px;top:116px;width:1px;height:19px;background:#e5e5e5"></div>
<div style="position:absolute;left:818px;top:116px;width:1px;height:19px;background:#e5e5e5"></div>
<div style="position:absolute;left:870px;top:116px;width:1px;height:19px;background:#e5e5e5"></div>
<div class="t" style="left:284px;top:120px;font-size:11.2px;line-height:13px;font-weight:400;color:#000;">No.</div>
<div class="t" style="left:325px;top:120px;font-size:11.2px;line-height:13px;font-weight:400;color:#000;">Attribute</div>
<div class="t" style="left:454.5px;top:120px;font-size:11.2px;line-height:13px;font-weight:400;color:#000;">Thre...</div>
<div class="t" style="left:491px;top:120px;font-size:11.2px;line-height:13px;font-weight:400;color:#000;">Value</div>
<div class="t" style="left:526.5px;top:120px;font-size:11.2px;line-height:13px;font-weight:400;color:#000;">Worst</div>
<div class="t" style="left:563px;top:120px;font-size:11.2px;line-height:13px;font-weight:400;color:#000;">Status</div>
<div class="t" style="left:628px;top:120px;font-size:11.2px;line-height:13px;font-weight:400;color:#000;">Data</div>
<div class="t" style="left:762.5px;top:120px;font-size:11.2px;line-height:13px;font-weight:400;color:#000;">Offset</div>
<div class="t" style="left:825px;top:120px;font-size:11.2px;line-height:13px;font-weight:400;color:#000;">Enable</div>
<div style="position:absolute;left:281px;top:135px;width:590px;height:18px;background:#2b8ade"></div>
<svg class="a" style="left:280.5px;top:134.5px" width="19" height="19" viewBox="0 0 19 19">
<circle cx="10.4" cy="10.4" r="7.2" fill="#3a3a3a" opacity="0.55"/>
<circle cx="9.4" cy="9.4" r="7.2" fill="#008a00" stroke="#000" stroke-width="1.1"/>
<path d="M5.6 9.6 L8.2 12.1 L13.3 6.8" fill="none" stroke="#fff" stroke-width="2.3" stroke-linejoin="miter" stroke-linecap="butt"/>
</svg>
<div class="t" style="left:301px;top:137px;font-size:11px;line-height:13px;font-weight:400;color:#fff;">1</div>
<div class="t" style="left:323px;top:137px;font-size:11px;line-height:13px;font-weight:400;color:#fff;letter-spacing:0.15px">Raw Read Error Rate</div>
<div class="t" style="left:453px;top:137px;font-size:11px;line-height:13px;font-weight:400;color:#fff;">6</div>
<div class="t" style="left:489px;top:137px;font-size:11px;line-height:13px;font-weight:400;color:#fff;">111</div>
<div class="t" style="left:525px;top:137px;font-size:11px;line-height:13px;font-weight:400;color:#fff;">99</div>
<div class="t" style="left:561px;top:137px;font-size:11px;line-height:13px;font-weight:400;color:#fff;">OK</div>
<div class="t" style="left:626px;top:137px;font-size:11px;line-height:13px;font-weight:700;color:#fff;">000002737770</div>
<div style="position:absolute;left:756px;top:136px;width:54px;height:16px;background:#c4c4c4"></div>
<div style="position:absolute;left:757px;top:137px;width:14px;height:14px;background:#fff"></div>
<div style="position:absolute;left:772px;top:137px;width:21px;height:14px;background:#0078d7"></div>
<div style="position:absolute;left:794px;top:137px;width:15px;height:14px;background:#fff"></div>
<div style="position:absolute;left:758px;top:142px;width:11px;height:3px;background:#148a48"></div>
<div style="position:absolute;left:796px;top:142px;width:11px;height:3px;background:#148a48"></div>
<div style="position:absolute;left:800px;top:138px;width:3px;height:11px;background:#148a48"></div>
<div class="t" style="left:772px;top:138px;font-size:11px;line-height:13px;font-weight:700;color:#fff;width:21px;text-align:center">0</div>
<div style="position:absolute;left:838px;top:137px;width:13px;height:13px;box-sizing:border-box;border:1.5px solid #1a4a82;background:linear-gradient(135deg,#e6e6e6,#fff 60%)"></div>
<svg class="a" style="left:840px;top:139px" width="9" height="9" viewBox="0 0 9 9"><path d="M1 4.2 L3.5 7 L8 1.5" fill="none" stroke="#1eab1e" stroke-width="2.2"/></svg>
<div style="position:absolute;left:281px;top:153px;width:590px;height:18px;background:#f3f3f3"></div>
<svg class="a" style="left:280.5px;top:152.5px" width="19" height="19" viewBox="0 0 19 19">
<circle cx="10.4" cy="10.4" r="7.2" fill="#3a3a3a" opacity="0.55"/>
<circle cx="9.4" cy="9.4" r="7.2" fill="#008a00" stroke="#000" stroke-width="1.1"/>
<path d="M5.6 9.6 L8.2 12.1 L13.3 6.8" fill="none" stroke="#fff" stroke-width="2.3" stroke-linejoin="miter" stroke-linecap="butt"/>
</svg>
<div class="t" style="left:301px;top:155px;font-size:11px;line-height:13px;font-weight:400;color:#000;">3</div>
<div class="t" style="left:323px;top:155px;font-size:11px;line-height:13px;font-weight:400;color:#000;letter-spacing:0.15px">Spin Up Time</div>
<div class="t" style="left:453px;top:155px;font-size:11px;line-height:13px;font-weight:400;color:#000;">0</div>
<div class="t" style="left:489px;top:155px;font-size:11px;line-height:13px;font-weight:400;color:#000;">94</div>
<div class="t" style="left:525px;top:155px;font-size:11px;line-height:13px;font-weight:400;color:#000;">94</div>
<div class="t" style="left:561px;top:155px;font-size:11px;line-height:13px;font-weight:400;color:#000;">OK (Always...</div>
<div class="t" style="left:626px;top:155px;font-size:11px;line-height:13px;font-weight:700;color:#000;">000000000000</div>
<div style="position:absolute;left:756px;top:154px;width:54px;height:16px;background:#c4c4c4"></div>
<div style="position:absolute;left:757px;top:155px;width:14px;height:14px;background:#fff"></div>
<div style="position:absolute;left:772px;top:155px;width:21px;height:14px;background:#f3f3f3"></div>
<div style="position:absolute;left:794px;top:155px;width:15px;height:14px;background:#fff"></div>
<div style="position:absolute;left:758px;top:160px;width:11px;height:3px;background:#148a48"></div>
<div style="position:absolute;left:796px;top:160px;width:11px;height:3px;background:#148a48"></div>
<div style="position:absolute;left:800px;top:156px;width:3px;height:11px;background:#148a48"></div>
<div class="t" style="left:772px;top:156px;font-size:11px;line-height:13px;font-weight:700;color:#000;width:21px;text-align:center">0</div>
<div style="position:absolute;left:838px;top:155px;width:13px;height:13px;box-sizing:border-box;border:1.5px solid #1a4a82;background:linear-gradient(135deg,#e6e6e6,#fff 60%)"></div>
<svg class="a" style="left:840px;top:157px" width="9" height="9" viewBox="0 0 9 9"><path d="M1 4.2 L3.5 7 L8 1.5" fill="none" stroke="#1eab1e" stroke-width="2.2"/></svg>
<div class="t" style="left:301px;top:173px;font-size:11px;line-height:13px;font-weight:400;color:#000;">4</div>
<div class="t" style="left:323px;top:173px;font-size:11px;line-height:13px;font-weight:400;color:#000;letter-spacing:0.15px">Start/Stop Count</div>
<div class="t" style="left:453px;top:173px;font-size:11px;line-height:13px;font-weight:400;color:#000;">20</div>
<div class="t" style="left:489px;top:173px;font-size:11px;line-height:13px;font-weight:400;color:#000;">100</div>
<div class="t" style="left:525px;top:173px;font-size:11px;line-height:13px;font-weight:400;color:#000;">100</div>
<div class="t" style="left:561px;top:173px;font-size:11px;line-height:13px;font-weight:400;color:#000;">OK</div>
<div class="t" style="left:626px;top:173px;font-size:11px;line-height:13px;font-weight:700;color:#000;">0000000001E2</div>
<div style="position:absolute;left:756px;top:172px;width:54px;height:16px;background:#c4c4c4"></div>
<div style="position:absolute;left:757px;top:173px;width:14px;height:14px;background:#fff"></div>
<div style="position:absolute;left:772px;top:173px;width:21px;height:14px;background:#fff"></div>
<div style="position:absolute;left:794px;top:173px;width:15px;height:14px;background:#fff"></div>
<div style="position:absolute;left:758px;top:178px;width:11px;height:3px;background:#148a48"></div>
<div style="position:absolute;left:796px;top:178px;width:11px;height:3px;background:#148a48"></div>
<div style="position:absolute;left:800px;top:174px;width:3px;height:11px;background:#148a48"></div>
<div class="t" style="left:772px;top:174px;font-size:11px;line-height:13px;font-weight:700;color:#000;width:21px;text-align:center">0</div>
<div style="position:absolute;left:838px;top:173px;width:13px;height:13px;box-sizing:border-box;border:1.5px solid #1a4a82;background:linear-gradient(135deg,#e6e6e6,#fff 60%)"></div>
<svg class="a" style="left:840px;top:175px" width="9" height="9" viewBox="0 0 9 9"><path d="M1 4.2 L3.5 7 L8 1.5" fill="none" stroke="#1eab1e" stroke-width="2.2"/></svg>
<div style="position:absolute;left:281px;top:189px;width:590px;height:18px;background:#f3f3f3"></div>
<svg class="a" style="left:280.5px;top:188.5px" width="19" height="19" viewBox="0 0 19 19">
<circle cx="10.4" cy="10.4" r="7.2" fill="#3a3a3a" opacity="0.55"/>
<circle cx="9.4" cy="9.4" r="7.2" fill="#008a00" stroke="#000" stroke-width="1.1"/>
<path d="M5.6 9.6 L8.2 12.1 L13.3 6.8" fill="none" stroke="#fff" stroke-width="2.3" stroke-linejoin="miter" stroke-linecap="butt"/>
</svg>
<div class="t" style="left:301px;top:191px;font-size:11px;line-height:13px;font-weight:400;color:#000;">5</div>
<div class="t" style="left:323px;top:191px;font-size:11px;line-height:13px;font-weight:400;color:#000;letter-spacing:0.15px">Reallocated Sectors Co...</div>
<div class="t" style="left:453px;top:191px;font-size:11px;line-height:13px;font-weight:400;color:#000;">10</div>
<div class="t" style="left:489px;top:191px;font-size:11px;line-height:13px;font-weight:400;color:#000;">100</div>
<div class="t" style="left:525px;top:191px;font-size:11px;line-height:13px;font-weight:400;color:#000;">100</div>
<div class="t" style="left:561px;top:191px;font-size:11px;line-height:13px;font-weight:400;color:#000;">OK</div>
<div class="t" style="left:626px;top:191px;font-size:11px;line-height:13px;font-weight:700;color:#000;">000000000000</div>
<div style="position:absolute;left:756px;top:190px;width:54px;height:16px;background:#c4c4c4"></div>
<div style="position:absolute;left:757px;top:191px;width:14px;height:14px;background:#fff"></div>
<div style="position:absolute;left:772px;top:191px;width:21px;height:14px;background:#f3f3f3"></div>
<div style="position:absolute;left:794px;top:191px;width:15px;height:14px;background:#fff"></div>
<div style="position:absolute;left:758px;top:196px;width:11px;height:3px;background:#148a48"></div>
<div style="position:absolute;left:796px;top:196px;width:11px;height:3px;background:#148a48"></div>
<div style="position:absolute;left:800px;top:192px;width:3px;height:11px;background:#148a48"></div>
<div class="t" style="left:772px;top:192px;font-size:11px;line-height:13px;font-weight:700;color:#000;width:21px;text-align:center">0</div>
<div style="position:absolute;left:838px;top:191px;width:13px;height:13px;box-sizing:border-box;border:1.5px solid #1a4a82;background:linear-gradient(135deg,#e6e6e6,#fff 60%)"></div>
<svg class="a" style="left:840px;top:193px" width="9" height="9" viewBox="0 0 9 9"><path d="M1 4.2 L3.5 7 L8 1.5" fill="none" stroke="#1eab1e" stroke-width="2.2"/></svg>
<div style="position:absolute;left:281px;top:207px;width:590px;height:18px;background:#f3f3f3"></div>
<svg class="a" style="left:280.5px;top:206.5px" width="19" height="19" viewBox="0 0 19 19">
<circle cx="10.4" cy="10.4" r="7.2" fill="#3a3a3a" opacity="0.55"/>
<circle cx="9.4" cy="9.4" r="7.2" fill="#008a00" stroke="#000" stroke-width="1.1"/>
<path d="M5.6 9.6 L8.2 12.1 L13.3 6.8" fill="none" stroke="#fff" stroke-width="2.3" stroke-linejoin="miter" stroke-linecap="butt"/>
</svg>
<div class="t" style="left:301px;top:209px;font-size:11px;line-height:13px;font-weight:400;color:#000;">7</div>
<div class="t" style="left:323px;top:209px;font-size:11px;line-height:13px;font-weight:400;color:#000;letter-spacing:0.15px">Seek Error Rate</div>
<div class="t" style="left:453px;top:209px;font-size:11px;line-height:13px;font-weight:400;color:#000;">30</div>
<div class="t" style="left:489px;top:209px;font-size:11px;line-height:13px;font-weight:400;color:#000;">67</div>
<div class="t" style="left:525px;top:209px;font-size:11px;line-height:13px;font-weight:400;color:#000;">60</div>
<div class="t" style="left:561px;top:209px;font-size:11px;line-height:13px;font-weight:400;color:#000;">OK</div>
<div class="t" style="left:626px;top:209px;font-size:11px;line-height:13px;font-weight:700;color:#000;">00000057A708</div>
<div style="position:absolute;left:756px;top:208px;width:54px;height:16px;background:#c4c4c4"></div>
<div style="position:absolute;left:757px;top:209px;width:14px;height:14px;background:#fff"></div>
<div style="position:absolute;left:772px;top:209px;width:21px;height:14px;background:#f3f3f3"></div>
<div style="position:absolute;left:794px;top:209px;width:15px;height:14px;background:#fff"></div>
<div style="position:absolute;left:758px;top:214px;width:11px;height:3px;background:#148a48"></div>
<div style="position:absolute;left:796px;top:214px;width:11px;height:3px;background:#148a48"></div>
<div style="position:absolute;left:800px;top:210px;width:3px;height:11px;background:#148a48"></div>
<div class="t" style="left:772px;top:210px;font-size:11px;line-height:13px;font-weight:700;color:#000;width:21px;text-align:center">0</div>
<div style="position:absolute;left:838px;top:209px;width:13px;height:13px;box-sizing:border-box;border:1.5px solid #1a4a82;background:linear-gradient(135deg,#e6e6e6,#fff 60%)"></div>
<svg class="a" style="left:840px;top:211px" width="9" height="9" viewBox="0 0 9 9"><path d="M1 4.2 L3.5 7 L8 1.5" fill="none" stroke="#1eab1e" stroke-width="2.2"/></svg>
<div class="t" style="left:301px;top:227px;font-size:11px;line-height:13px;font-weight:400;color:#000;">9</div>
<div class="t" style="left:323px;top:227px;font-size:11px;line-height:13px;font-weight:400;color:#000;letter-spacing:0.15px">Power On Time Count</div>
<div class="t" style="left:453px;top:227px;font-size:11px;line-height:13px;font-weight:400;color:#000;">0</div>
<div class="t" style="left:489px;top:227px;font-size:11px;line-height:13px;font-weight:400;color:#000;">98</div>
<div class="t" style="left:525px;top:227px;font-size:11px;line-height:13px;font-weight:400;color:#000;">98</div>
<div class="t" style="left:561px;top:227px;font-size:11px;line-height:13px;font-weight:400;color:#000;">OK (Always...</div>
<div class="t" style="left:626px;top:227px;font-size:11px;line-height:13px;font-weight:700;color:#000;">00000000073A</div>
<div style="position:absolute;left:756px;top:226px;width:54px;height:16px;background:#c4c4c4"></div>
<div style="position:absolute;left:757px;top:227px;width:14px;height:14px;background:#fff"></div>
<div style="position:absolute;left:772px;top:227px;width:21px;height:14px;background:#fff"></div>
<div style="position:absolute;left:794px;top:227px;width:15px;height:14px;background:#fff"></div>
<div style="position:absolute;left:758px;top:232px;width:11px;height:3px;background:#148a48"></div>
<div style="position:absolute;left:796px;top:232px;width:11px;height:3px;background:#148a48"></div>
<div style="position:absolute;left:800px;top:228px;width:3px;height:11px;background:#148a48"></div>
<div class="t" style="left:772px;top:228px;font-size:11px;line-height:13px;font-weight:700;color:#000;width:21px;text-align:center">0</div>
<div style="position:absolute;left:838px;top:227px;width:13px;height:13px;box-sizing:border-box;border:1.5px solid #1a4a82;background:linear-gradient(135deg,#e6e6e6,#fff 60%)"></div>
<svg class="a" style="left:840px;top:229px" width="9" height="9" viewBox="0 0 9 9"><path d="M1 4.2 L3.5 7 L8 1.5" fill="none" stroke="#1eab1e" stroke-width="2.2"/></svg>
<div style="position:absolute;left:281px;top:243px;width:590px;height:18px;background:#f3f3f3"></div>
<svg class="a" style="left:280.5px;top:242.5px" width="19" height="19" viewBox="0 0 19 19">
<circle cx="10.4" cy="10.4" r="7.2" fill="#3a3a3a" opacity="0.55"/>
<circle cx="9.4" cy="9.4" r="7.2" fill="#008a00" stroke="#000" stroke-width="1.1"/>
<path d="M5.6 9.6 L8.2 12.1 L13.3 6.8" fill="none" stroke="#fff" stroke-width="2.3" stroke-linejoin="miter" stroke-linecap="butt"/>
</svg>
<div class="t" style="left:301px;top:245px;font-size:11px;line-height:13px;font-weight:400;color:#000;">10</div>
<div class="t" style="left:323px;top:245px;font-size:11px;line-height:13px;font-weight:400;color:#000;letter-spacing:0.15px">Spin Retry Count</div>
<div class="t" style="left:453px;top:245px;font-size:11px;line-height:13px;font-weight:400;color:#000;">97</div>
<div class="t" style="left:489px;top:245px;font-size:11px;line-height:13px;font-weight:400;color:#000;">100</div>
<div class="t" style="left:525px;top:245px;font-size:11px;line-height:13px;font-weight:400;color:#000;">100</div>
<div class="t" style="left:561px;top:245px;font-size:11px;line-height:13px;font-weight:400;color:#000;">OK</div>
<div class="t" style="left:626px;top:245px;font-size:11px;line-height:13px;font-weight:700;color:#000;">000000000000</div>
<div style="position:absolute;left:756px;top:244px;width:54px;height:16px;background:#c4c4c4"></div>
<div style="position:absolute;left:757px;top:245px;width:14px;height:14px;background:#fff"></div>
<div style="position:absolute;left:772px;top:245px;width:21px;height:14px;background:#f3f3f3"></div>
<div style="position:absolute;left:794px;top:245px;width:15px;height:14px;background:#fff"></div>
<div style="position:absolute;left:758px;top:250px;width:11px;height:3px;background:#148a48"></div>
<div style="position:absolute;left:796px;top:250px;width:11px;height:3px;background:#148a48"></div>
<div style="position:absolute;left:800px;top:246px;width:3px;height:11px;background:#148a48"></div>
<div class="t" style="left:772px;top:246px;font-size:11px;line-height:13px;font-weight:700;color:#000;width:21px;text-align:center">0</div>
<div style="position:absolute;left:838px;top:245px;width:13px;height:13px;box-sizing:border-box;border:1.5px solid #1a4a82;background:linear-gradient(135deg,#e6e6e6,#fff 60%)"></div>
<svg class="a" style="left:840px;top:247px" width="9" height="9" viewBox="0 0 9 9"><path d="M1 4.2 L3.5 7 L8 1.5" fill="none" stroke="#1eab1e" stroke-width="2.2"/></svg>
<div class="t" style="left:301px;top:263px;font-size:11px;line-height:13px;font-weight:400;color:#000;">12</div>
<div class="t" style="left:323px;top:263px;font-size:11px;line-height:13px;font-weight:400;color:#000;letter-spacing:0.15px">Drive Power Cycle Count</div>
<div class="t" style="left:453px;top:263px;font-size:11px;line-height:13px;font-weight:400;color:#000;">20</div>
<div class="t" style="left:489px;top:263px;font-size:11px;line-height:13px;font-weight:400;color:#000;">100</div>
<div class="t" style="left:525px;top:263px;font-size:11px;line-height:13px;font-weight:400;color:#000;">100</div>
<div class="t" style="left:561px;top:263px;font-size:11px;line-height:13px;font-weight:400;color:#000;">OK</div>
<div class="t" style="left:626px;top:263px;font-size:11px;line-height:13px;font-weight:700;color:#000;">0000000001CE</div>
<div style="position:absolute;left:756px;top:262px;width:54px;height:16px;background:#c4c4c4"></div>
<div style="position:absolute;left:757px;top:263px;width:14px;height:14px;background:#fff"></div>
<div style="position:absolute;left:772px;top:263px;width:21px;height:14px;background:#fff"></div>
<div style="position:absolute;left:794px;top:263px;width:15px;height:14px;background:#fff"></div>
<div style="position:absolute;left:758px;top:268px;width:11px;height:3px;background:#148a48"></div>
<div style="position:absolute;left:796px;top:268px;width:11px;height:3px;background:#148a48"></div>
<div style="position:absolute;left:800px;top:264px;width:3px;height:11px;background:#148a48"></div>
<div class="t" style="left:772px;top:264px;font-size:11px;line-height:13px;font-weight:700;color:#000;width:21px;text-align:center">0</div>
<div style="position:absolute;left:838px;top:263px;width:13px;height:13px;box-sizing:border-box;border:1.5px solid #1a4a82;background:linear-gradient(135deg,#e6e6e6,#fff 60%)"></div>
<svg class="a" style="left:840px;top:265px" width="9" height="9" viewBox="0 0 9 9"><path d="M1 4.2 L3.5 7 L8 1.5" fill="none" stroke="#1eab1e" stroke-width="2.2"/></svg>
<div class="t" style="left:301px;top:281px;font-size:11px;line-height:13px;font-weight:400;color:#000;">183</div>
<div class="t" style="left:323px;top:281px;font-size:11px;line-height:13px;font-weight:400;color:#000;letter-spacing:0.15px">SATA Downshift Count</div>
<div class="t" style="left:453px;top:281px;font-size:11px;line-height:13px;font-weight:400;color:#000;">0</div>
<div class="t" style="left:489px;top:281px;font-size:11px;line-height:13px;font-weight:400;color:#000;">100</div>
<div class="t" style="left:525px;top:281px;font-size:11px;line-height:13px;font-weight:400;color:#000;">100</div>
<div class="t" style="left:561px;top:281px;font-size:11px;line-height:13px;font-weight:400;color:#000;">OK (Always...</div>
<div class="t" style="left:626px;top:281px;font-size:11px;line-height:13px;font-weight:700;color:#000;">000000000000</div>
<div style="position:absolute;left:756px;top:280px;width:54px;height:16px;background:#c4c4c4"></div>
<div style="position:absolute;left:757px;top:281px;width:14px;height:14px;background:#fff"></div>
<div style="position:absolute;left:772px;top:281px;width:21px;height:14px;background:#fff"></div>
<div style="position:absolute;left:794px;top:281px;width:15px;height:14px;background:#fff"></div>
<div style="position:absolute;left:758px;top:286px;width:11px;height:3px;background:#148a48"></div>
<div style="position:absolute;left:796px;top:286px;width:11px;height:3px;background:#148a48"></div>
<div style="position:absolute;left:800px;top:282px;width:3px;height:11px;background:#148a48"></div>
<div class="t" style="left:772px;top:282px;font-size:11px;line-height:13px;font-weight:700;color:#000;width:21px;text-align:center">0</div>
<div style="position:absolute;left:838px;top:281px;width:13px;height:13px;box-sizing:border-box;border:1.5px solid #1a4a82;background:linear-gradient(135deg,#e6e6e6,#fff 60%)"></div>
<svg class="a" style="left:840px;top:283px" width="9" height="9" viewBox="0 0 9 9"><path d="M1 4.2 L3.5 7 L8 1.5" fill="none" stroke="#1eab1e" stroke-width="2.2"/></svg>
<div class="t" style="left:301px;top:299px;font-size:11px;line-height:13px;font-weight:400;color:#000;">184</div>
<div class="t" style="left:323px;top:299px;font-size:11px;line-height:13px;font-weight:400;color:#000;letter-spacing:0.15px">End-to-End Error Count</div>
<div class="t" style="left:453px;top:299px;font-size:11px;line-height:13px;font-weight:400;color:#000;">99</div>
<div class="t" style="left:489px;top:299px;font-size:11px;line-height:13px;font-weight:400;color:#000;">100</div>
<div class="t" style="left:525px;top:299px;font-size:11px;line-height:13px;font-weight:400;color:#000;">100</div>
<div class="t" style="left:561px;top:299px;font-size:11px;line-height:13px;font-weight:400;color:#000;">OK</div>
<div class="t" style="left:626px;top:299px;font-size:11px;line-height:13px;font-weight:700;color:#000;">000000000000</div>
<div style="position:absolute;left:756px;top:298px;width:54px;height:16px;background:#c4c4c4"></div>
<div style="position:absolute;left:757px;top:299px;width:14px;height:14px;background:#fff"></div>
<div style="position:absolute;left:772px;top:299px;width:21px;height:14px;background:#fff"></div>
<div style="position:absolute;left:794px;top:299px;width:15px;height:14px;background:#fff"></div>
<div style="position:absolute;left:758px;top:304px;width:11px;height:3px;background:#148a48"></div>
<div style="position:absolute;left:796px;top:304px;width:11px;height:3px;background:#148a48"></div>
<div style="position:absolute;left:800px;top:300px;width:3px;height:11px;background:#148a48"></div>
<div class="t" style="left:772px;top:300px;font-size:11px;line-height:13px;font-weight:700;color:#000;width:21px;text-align:center">0</div>
<div style="position:absolute;left:838px;top:299px;width:13px;height:13px;box-sizing:border-box;border:1.5px solid #1a4a82;background:linear-gradient(135deg,#e6e6e6,#fff 60%)"></div>
<svg class="a" style="left:840px;top:301px" width="9" height="9" viewBox="0 0 9 9"><path d="M1 4.2 L3.5 7 L8 1.5" fill="none" stroke="#1eab1e" stroke-width="2.2"/></svg>
<div class="t" style="left:301px;top:317px;font-size:11px;line-height:13px;font-weight:400;color:#000;">187</div>
<div class="t" style="left:323px;top:317px;font-size:11px;line-height:13px;font-weight:400;color:#000;letter-spacing:0.15px">Reported Uncorrectabl...</div>
<div class="t" style="left:453px;top:317px;font-size:11px;line-height:13px;font-weight:400;color:#000;">0</div>
<div class="t" style="left:489px;top:317px;font-size:11px;line-height:13px;font-weight:400;color:#000;">100</div>
<div class="t" style="left:525px;top:317px;font-size:11px;line-height:13px;font-weight:400;color:#000;">100</div>
<div class="t" style="left:561px;top:317px;font-size:11px;line-height:13px;font-weight:400;color:#000;">OK (Always...</div>
<div class="t" style="left:626px;top:317px;font-size:11px;line-height:13px;font-weight:700;color:#000;">000000000000</div>
<div style="position:absolute;left:756px;top:316px;width:54px;height:16px;background:#c4c4c4"></div>
<div style="position:absolute;left:757px;top:317px;width:14px;height:14px;background:#fff"></div>
<div style="position:absolute;left:772px;top:317px;width:21px;height:14px;background:#fff"></div>
<div style="position:absolute;left:794px;top:317px;width:15px;height:14px;background:#fff"></div>
<div style="position:absolute;left:758px;top:322px;width:11px;height:3px;background:#148a48"></div>
<div style="position:absolute;left:796px;top:322px;width:11px;height:3px;background:#148a48"></div>
<div style="position:absolute;left:800px;top:318px;width:3px;height:11px;background:#148a48"></div>
<div class="t" style="left:772px;top:318px;font-size:11px;line-height:13px;font-weight:700;color:#000;width:21px;text-align:center">0</div>
<div style="position:absolute;left:838px;top:317px;width:13px;height:13px;box-sizing:border-box;border:1.5px solid #1a4a82;background:linear-gradient(135deg,#e6e6e6,#fff 60%)"></div>
<svg class="a" style="left:840px;top:319px" width="9" height="9" viewBox="0 0 9 9"><path d="M1 4.2 L3.5 7 L8 1.5" fill="none" stroke="#1eab1e" stroke-width="2.2"/></svg>
<div class="t" style="left:301px;top:335px;font-size:11px;line-height:13px;font-weight:400;color:#000;">188</div>
<div class="t" style="left:323px;top:335px;font-size:11px;line-height:13px;font-weight:400;color:#000;letter-spacing:0.15px">Command Timeout</div>
<div class="t" style="left:453px;top:335px;font-size:11px;line-height:13px;font-weight:400;color:#000;">0</div>
<div class="t" style="left:489px;top:335px;font-size:11px;line-height:13px;font-weight:400;color:#000;">100</div>
<div class="t" style="left:525px;top:335px;font-size:11px;line-height:13px;font-weight:400;color:#000;">99</div>
<div class="t" style="left:561px;top:335px;font-size:11px;line-height:13px;font-weight:400;color:#000;">OK (Always...</div>
<div class="t" style="left:626px;top:335px;font-size:11px;line-height:13px;font-weight:700;color:#000;">000000010001</div>
<div style="position:absolute;left:756px;top:334px;width:54px;height:16px;background:#c4c4c4"></div>
<div style="position:absolute;left:757px;top:335px;width:14px;height:14px;background:#fff"></div>
<div style="position:absolute;left:772px;top:335px;width:21px;height:14px;background:#fff"></div>
<div style="position:absolute;left:794px;top:335px;width:15px;height:14px;background:#fff"></div>
<div style="position:absolute;left:758px;top:340px;width:11px;height:3px;background:#148a48"></div>
<div style="position:absolute;left:796px;top:340px;width:11px;height:3px;background:#148a48"></div>
<div style="position:absolute;left:800px;top:336px;width:3px;height:11px;background:#148a48"></div>
<div class="t" style="left:772px;top:336px;font-size:11px;line-height:13px;font-weight:700;color:#000;width:21px;text-align:center">0</div>
<div style="position:absolute;left:838px;top:335px;width:13px;height:13px;box-sizing:border-box;border:1.5px solid #1a4a82;background:linear-gradient(135deg,#e6e6e6,#fff 60%)"></div>
<svg class="a" style="left:840px;top:337px" width="9" height="9" viewBox="0 0 9 9"><path d="M1 4.2 L3.5 7 L8 1.5" fill="none" stroke="#1eab1e" stroke-width="2.2"/></svg>
<div class="t" style="left:301px;top:353px;font-size:11px;line-height:13px;font-weight:400;color:#000;">189</div>
<div class="t" style="left:323px;top:353px;font-size:11px;line-height:13px;font-weight:400;color:#000;letter-spacing:0.15px">High Fly Writes</div>
<div class="t" style="left:453px;top:353px;font-size:11px;line-height:13px;font-weight:400;color:#000;">0</div>
<div class="t" style="left:489px;top:353px;font-size:11px;line-height:13px;font-weight:400;color:#000;">100</div>
<div class="t" style="left:525px;top:353px;font-size:11px;line-height:13px;font-weight:400;color:#000;">100</div>
<div class="t" style="left:561px;top:353px;font-size:11px;line-height:13px;font-weight:400;color:#000;">OK (Always...</div>
<div class="t" style="left:626px;top:353px;font-size:11px;line-height:13px;font-weight:700;color:#000;">000000000000</div>
<div style="position:absolute;left:756px;top:352px;width:54px;height:16px;background:#c4c4c4"></div>
<div style="position:absolute;left:757px;top:353px;width:14px;height:14px;background:#fff"></div>
<div style="position:absolute;left:772px;top:353px;width:21px;height:14px;background:#fff"></div>
<div style="position:absolute;left:794px;top:353px;width:15px;height:14px;background:#fff"></div>
<div style="position:absolute;left:758px;top:358px;width:11px;height:3px;background:#148a48"></div>
<div style="position:absolute;left:796px;top:358px;width:11px;height:3px;background:#148a48"></div>
<div style="position:absolute;left:800px;top:354px;width:3px;height:11px;background:#148a48"></div>
<div class="t" style="left:772px;top:354px;font-size:11px;line-height:13px;font-weight:700;color:#000;width:21px;text-align:center">0</div>
<div style="position:absolute;left:838px;top:353px;width:13px;height:13px;box-sizing:border-box;border:1.5px solid #1a4a82;background:linear-gradient(135deg,#e6e6e6,#fff 60%)"></div>
<svg class="a" style="left:840px;top:355px" width="9" height="9" viewBox="0 0 9 9"><path d="M1 4.2 L3.5 7 L8 1.5" fill="none" stroke="#1eab1e" stroke-width="2.2"/></svg>
<div class="t" style="left:301px;top:371px;font-size:11px;line-height:13px;font-weight:400;color:#000;">190</div>
<div class="t" style="left:323px;top:371px;font-size:11px;line-height:13px;font-weight:400;color:#000;letter-spacing:0.15px">Airflow Temperature</div>
<div class="t" style="left:453px;top:371px;font-size:11px;line-height:13px;font-weight:400;color:#000;">45</div>
<div class="t" style="left:489px;top:371px;font-size:11px;line-height:13px;font-weight:400;color:#000;">66</div>
<div class="t" style="left:525px;top:371px;font-size:11px;line-height:13px;font-weight:400;color:#000;">57</div>
<div class="t" style="left:561px;top:371px;font-size:11px;line-height:13px;font-weight:400;color:#000;">OK</div>
<div class="t" style="left:626px;top:371px;font-size:11px;line-height:13px;font-weight:700;color:#000;">000023170022</div>
<div style="position:absolute;left:756px;top:370px;width:54px;height:16px;background:#c4c4c4"></div>
<div style="position:absolute;left:757px;top:371px;width:14px;height:14px;background:#fff"></div>
<div style="position:absolute;left:772px;top:371px;width:21px;height:14px;background:#fff"></div>
<div style="position:absolute;left:794px;top:371px;width:15px;height:14px;background:#fff"></div>
<div style="position:absolute;left:758px;top:376px;width:11px;height:3px;background:#148a48"></div>
<div style="position:absolute;left:796px;top:376px;width:11px;height:3px;background:#148a48"></div>
<div style="position:absolute;left:800px;top:372px;width:3px;height:11px;background:#148a48"></div>
<div class="t" style="left:772px;top:372px;font-size:11px;line-height:13px;font-weight:700;color:#000;width:21px;text-align:center">0</div>
<div style="position:absolute;left:838px;top:371px;width:13px;height:13px;box-sizing:border-box;border:1.5px solid #1a4a82;background:linear-gradient(135deg,#e6e6e6,#fff 60%)"></div>
<svg class="a" style="left:840px;top:373px" width="9" height="9" viewBox="0 0 9 9"><path d="M1 4.2 L3.5 7 L8 1.5" fill="none" stroke="#1eab1e" stroke-width="2.2"/></svg>
<div class="t" style="left:301px;top:389px;font-size:11px;line-height:13px;font-weight:400;color:#000;">191</div>
<div class="t" style="left:323px;top:389px;font-size:11px;line-height:13px;font-weight:400;color:#000;letter-spacing:0.15px">G-Sense Error Rate</div>
<div class="t" style="left:453px;top:389px;font-size:11px;line-height:13px;font-weight:400;color:#000;">0</div>
<div class="t" style="left:489px;top:389px;font-size:11px;line-height:13px;font-weight:400;color:#000;">100</div>
<div class="t" style="left:525px;top:389px;font-size:11px;line-height:13px;font-weight:400;color:#000;">100</div>
<div class="t" style="left:561px;top:389px;font-size:11px;line-height:13px;font-weight:400;color:#000;">OK (Always...</div>
<div class="t" style="left:626px;top:389px;font-size:11px;line-height:13px;font-weight:700;color:#000;">000000000000</div>
<div style="position:absolute;left:756px;top:388px;width:54px;height:16px;background:#c4c4c4"></div>
<div style="position:absolute;left:757px;top:389px;width:14px;height:14px;background:#fff"></div>
<div style="position:absolute;left:772px;top:389px;width:21px;height:14px;background:#fff"></div>
<div style="position:absolute;left:794px;top:389px;width:15px;height:14px;background:#fff"></div>
<div style="position:absolute;left:758px;top:394px;width:11px;height:3px;background:#148a48"></div>
<div style="position:absolute;left:796px;top:394px;width:11px;height:3px;background:#148a48"></div>
<div style="position:absolute;left:800px;top:390px;width:3px;height:11px;background:#148a48"></div>
<div class="t" style="left:772px;top:390px;font-size:11px;line-height:13px;font-weight:700;color:#000;width:21px;text-align:center">0</div>
<div style="position:absolute;left:838px;top:389px;width:13px;height:13px;box-sizing:border-box;border:1.5px solid #1a4a82;background:linear-gradient(135deg,#e6e6e6,#fff 60%)"></div>
<svg class="a" style="left:840px;top:391px" width="9" height="9" viewBox="0 0 9 9"><path d="M1 4.2 L3.5 7 L8 1.5" fill="none" stroke="#1eab1e" stroke-width="2.2"/></svg>
<div class="t" style="left:301px;top:407px;font-size:11px;line-height:13px;font-weight:400;color:#000;">192</div>
<div class="t" style="left:323px;top:407px;font-size:11px;line-height:13px;font-weight:400;color:#000;letter-spacing:0.15px">Power off Retract Cycle ...</div>
<div class="t" style="left:453px;top:407px;font-size:11px;line-height:13px;font-weight:400;color:#000;">0</div>
<div class="t" style="left:489px;top:407px;font-size:11px;line-height:13px;font-weight:400;color:#000;">100</div>
<div class="t" style="left:525px;top:407px;font-size:11px;line-height:13px;font-weight:400;color:#000;">100</div>
<div class="t" style="left:561px;top:407px;font-size:11px;line-height:13px;font-weight:400;color:#000;">OK (Always...</div>
<div class="t" style="left:626px;top:407px;font-size:11px;line-height:13px;font-weight:700;color:#000;">000000000010</div>
<div style="position:absolute;left:756px;top:406px;width:54px;height:16px;background:#c4c4c4"></div>
<div style="position:absolute;left:757px;top:407px;width:14px;height:14px;background:#fff"></div>
<div style="position:absolute;left:772px;top:407px;width:21px;height:14px;background:#fff"></div>
<div style="position:absolute;left:794px;top:407px;width:15px;height:14px;background:#fff"></div>
<div style="position:absolute;left:758px;top:412px;width:11px;height:3px;background:#148a48"></div>
<div style="position:absolute;left:796px;top:412px;width:11px;height:3px;background:#148a48"></div>
<div style="position:absolute;left:800px;top:408px;width:3px;height:11px;background:#148a48"></div>
<div class="t" style="left:772px;top:408px;font-size:11px;line-height:13px;font-weight:700;color:#000;width:21px;text-align:center">0</div>
<div style="position:absolute;left:838px;top:407px;width:13px;height:13px;box-sizing:border-box;border:1.5px solid #1a4a82;background:linear-gradient(135deg,#e6e6e6,#fff 60%)"></div>
<svg class="a" style="left:840px;top:409px" width="9" height="9" viewBox="0 0 9 9"><path d="M1 4.2 L3.5 7 L8 1.5" fill="none" stroke="#1eab1e" stroke-width="2.2"/></svg>
<div class="t" style="left:301px;top:425px;font-size:11px;line-height:13px;font-weight:400;color:#000;">193</div>
<div class="t" style="left:323px;top:425px;font-size:11px;line-height:13px;font-weight:400;color:#000;letter-spacing:0.15px">Load/Unload Cycle Cou...</div>
<div class="t" style="left:453px;top:425px;font-size:11px;line-height:13px;font-weight:400;color:#000;">0</div>
<div class="t" style="left:489px;top:425px;font-size:11px;line-height:13px;font-weight:400;color:#000;">97</div>
<div class="t" style="left:525px;top:425px;font-size:11px;line-height:13px;font-weight:400;color:#000;">97</div>
<div class="t" style="left:561px;top:425px;font-size:11px;line-height:13px;font-weight:400;color:#000;">OK (Always...</div>
<div class="t" style="left:626px;top:425px;font-size:11px;line-height:13px;font-weight:700;color:#000;">000000001B80</div>
<div style="position:absolute;left:756px;top:424px;width:54px;height:16px;background:#c4c4c4"></div>
<div style="position:absolute;left:757px;top:425px;width:14px;height:14px;background:#fff"></div>
<div style="position:absolute;left:772px;top:425px;width:21px;height:14px;background:#fff"></div>
<div style="position:absolute;left:794px;top:425px;width:15px;height:14px;background:#fff"></div>
<div style="position:absolute;left:758px;top:430px;width:11px;height:3px;background:#148a48"></div>
<div style="position:absolute;left:796px;top:430px;width:11px;height:3px;background:#148a48"></div>
<div style="position:absolute;left:800px;top:426px;width:3px;height:11px;background:#148a48"></div>
<div class="t" style="left:772px;top:426px;font-size:11px;line-height:13px;font-weight:700;color:#000;width:21px;text-align:center">0</div>
<div style="position:absolute;left:838px;top:425px;width:13px;height:13px;box-sizing:border-box;border:1.5px solid #1a4a82;background:linear-gradient(135deg,#e6e6e6,#fff 60%)"></div>
<svg class="a" style="left:840px;top:427px" width="9" height="9" viewBox="0 0 9 9"><path d="M1 4.2 L3.5 7 L8 1.5" fill="none" stroke="#1eab1e" stroke-width="2.2"/></svg>
<div class="t" style="left:301px;top:443px;font-size:11px;line-height:13px;font-weight:400;color:#000;">194</div>
<div class="t" style="left:323px;top:443px;font-size:11px;line-height:13px;font-weight:400;color:#000;letter-spacing:0.15px">Disk Temperature</div>
<div class="t" style="left:453px;top:443px;font-size:11px;line-height:13px;font-weight:400;color:#000;">0</div>
<div class="t" style="left:489px;top:443px;font-size:11px;line-height:13px;font-weight:400;color:#000;">34</div>
<div class="t" style="left:525px;top:443px;font-size:11px;line-height:13px;font-weight:400;color:#000;">43</div>
<div class="t" style="left:561px;top:443px;font-size:11px;line-height:13px;font-weight:400;color:#000;">OK (Always...</div>
<div class="t" style="left:626px;top:443px;font-size:11px;line-height:13px;font-weight:700;color:#000;">001200000022</div>
<div style="position:absolute;left:756px;top:442px;width:54px;height:16px;background:#c4c4c4"></div>
<div style="position:absolute;left:757px;top:443px;width:14px;height:14px;background:#fff"></div>
<div style="position:absolute;left:772px;top:443px;width:21px;height:14px;background:#fff"></div>
<div style="position:absolute;left:794px;top:443px;width:15px;height:14px;background:#fff"></div>
<div style="position:absolute;left:758px;top:448px;width:11px;height:3px;background:#148a48"></div>
<div style="position:absolute;left:796px;top:448px;width:11px;height:3px;background:#148a48"></div>
<div style="position:absolute;left:800px;top:444px;width:3px;height:11px;background:#148a48"></div>
<div class="t" style="left:772px;top:444px;font-size:11px;line-height:13px;font-weight:700;color:#000;width:21px;text-align:center">0</div>
<div style="position:absolute;left:838px;top:443px;width:13px;height:13px;box-sizing:border-box;border:1.5px solid #1a4a82;background:linear-gradient(135deg,#e6e6e6,#fff 60%)"></div>
<svg class="a" style="left:840px;top:445px" width="9" height="9" viewBox="0 0 9 9"><path d="M1 4.2 L3.5 7 L8 1.5" fill="none" stroke="#1eab1e" stroke-width="2.2"/></svg>
<div style="position:absolute;left:281px;top:459px;width:590px;height:18px;background:#f3f3f3"></div>
<svg class="a" style="left:280.5px;top:458.5px" width="19" height="19" viewBox="0 0 19 19">
<circle cx="10.4" cy="10.4" r="7.2" fill="#3a3a3a" opacity="0.55"/>
<circle cx="9.4" cy="9.4" r="7.2" fill="#008a00" stroke="#000" stroke-width="1.1"/>
<path d="M5.6 9.6 L8.2 12.1 L13.3 6.8" fill="none" stroke="#fff" stroke-width="2.3" stroke-linejoin="miter" stroke-linecap="butt"/>
</svg>
<div class="t" style="left:301px;top:461px;font-size:11px;line-height:13px;font-weight:400;color:#000;">197</div>
<div class="t" style="left:323px;top:461px;font-size:11px;line-height:13px;font-weight:400;color:#000;letter-spacing:0.15px">Current Pending Sector...</div>
<div class="t" style="left:453px;top:461px;font-size:11px;line-height:13px;font-weight:400;color:#000;">0</div>
<div class="t" style="left:489px;top:461px;font-size:11px;line-height:13px;font-weight:400;color:#000;">100</div>
<div class="t" style="left:525px;top:461px;font-size:11px;line-height:13px;font-weight:400;color:#000;">100</div>
<div class="t" style="left:561px;top:461px;font-size:11px;line-height:13px;font-weight:400;color:#000;">OK (Always...</div>
<div class="t" style="left:626px;top:461px;font-size:11px;line-height:13px;font-weight:700;color:#000;">000000000000</div>
<div style="position:absolute;left:756px;top:460px;width:54px;height:16px;background:#c4c4c4"></div>
<div style="position:absolute;left:757px;top:461px;width:14px;height:14px;background:#fff"></div>
<div style="position:absolute;left:772px;top:461px;width:21px;height:14px;background:#f3f3f3"></div>
<div style="position:absolute;left:794px;top:461px;width:15px;height:14px;background:#fff"></div>
<div style="position:absolute;left:758px;top:466px;width:11px;height:3px;background:#148a48"></div>
<div style="position:absolute;left:796px;top:466px;width:11px;height:3px;background:#148a48"></div>
<div style="position:absolute;left:800px;top:462px;width:3px;height:11px;background:#148a48"></div>
<div class="t" style="left:772px;top:462px;font-size:11px;line-height:13px;font-weight:700;color:#000;width:21px;text-align:center">0</div>
<div style="position:absolute;left:838px;top:461px;width:13px;height:13px;box-sizing:border-box;border:1.5px solid #1a4a82;background:linear-gradient(135deg,#e6e6e6,#fff 60%)"></div>
<svg class="a" style="left:840px;top:463px" width="9" height="9" viewBox="0 0 9 9"><path d="M1 4.2 L3.5 7 L8 1.5" fill="none" stroke="#1eab1e" stroke-width="2.2"/></svg>
<div style="position:absolute;left:281px;top:477px;width:590px;height:18px;background:#f3f3f3"></div>
<svg class="a" style="left:280.5px;top:476.5px" width="19" height="19" viewBox="0 0 19 19">
<circle cx="10.4" cy="10.4" r="7.2" fill="#3a3a3a" opacity="0.55"/>
<circle cx="9.4" cy="9.4" r="7.2" fill="#008a00" stroke="#000" stroke-width="1.1"/>
<path d="M5.6 9.6 L8.2 12.1 L13.3 6.8" fill="none" stroke="#fff" stroke-width="2.3" stroke-linejoin="miter" stroke-linecap="butt"/>
</svg>
<div class="t" style="left:301px;top:479px;font-size:11px;line-height:13px;font-weight:400;color:#000;">198</div>
<div class="t" style="left:323px;top:479px;font-size:11px;line-height:13px;font-weight:400;color:#000;letter-spacing:0.15px">Off-Line Uncorrectable ...</div>
<div class="t" style="left:453px;top:479px;font-size:11px;line-height:13px;font-weight:400;color:#000;">0</div>
<div class="t" style="left:489px;top:479px;font-size:11px;line-height:13px;font-weight:400;color:#000;">100</div>
<div class="t" style="left:525px;top:479px;font-size:11px;line-height:13px;font-weight:400;color:#000;">100</div>
<div class="t" style="left:561px;top:479px;font-size:11px;line-height:13px;font-weight:400;color:#000;">OK (Always...</div>
<div class="t" style="left:626px;top:479px;font-size:11px;line-height:13px;font-weight:700;color:#000;">000000000000</div>
<div style="position:absolute;left:756px;top:478px;width:54px;height:16px;background:#c4c4c4"></div>
<div style="position:absolute;left:757px;top:479px;width:14px;height:14px;background:#fff"></div>
<div style="position:absolute;left:772px;top:479px;width:21px;height:14px;background:#f3f3f3"></div>
<div style="position:absolute;left:794px;top:479px;width:15px;height:14px;background:#fff"></div>
<div style="position:absolute;left:758px;top:484px;width:11px;height:3px;background:#148a48"></div>
<div style="position:absolute;left:796px;top:484px;width:11px;height:3px;background:#148a48"></div>
<div style="position:absolute;left:800px;top:480px;width:3px;height:11px;background:#148a48"></div>
<div class="t" style="left:772px;top:480px;font-size:11px;line-height:13px;font-weight:700;color:#000;width:21px;text-align:center">0</div>
<div style="position:absolute;left:838px;top:479px;width:13px;height:13px;box-sizing:border-box;border:1.5px solid #1a4a82;background:linear-gradient(135deg,#e6e6e6,#fff 60%)"></div>
<svg class="a" style="left:840px;top:481px" width="9" height="9" viewBox="0 0 9 9"><path d="M1 4.2 L3.5 7 L8 1.5" fill="none" stroke="#1eab1e" stroke-width="2.2"/></svg>
<div class="t" style="left:301px;top:497px;font-size:11px;line-height:13px;font-weight:400;color:#000;">199</div>
<div class="t" style="left:323px;top:497px;font-size:11px;line-height:13px;font-weight:400;color:#000;letter-spacing:0.15px">Ultra ATA CRC Error Co...</div>
<div class="t" style="left:453px;top:497px;font-size:11px;line-height:13px;font-weight:400;color:#000;">0</div>
<div class="t" style="left:489px;top:497px;font-size:11px;line-height:13px;font-weight:400;color:#000;">200</div>
<div class="t" style="left:525px;top:497px;font-size:11px;line-height:13px;font-weight:400;color:#000;">200</div>
<div class="t" style="left:561px;top:497px;font-size:11px;line-height:13px;font-weight:400;color:#000;">OK (Always...</div>
<div class="t" style="left:626px;top:497px;font-size:11px;line-height:13px;font-weight:700;color:#000;">000000000000</div>
<div style="position:absolute;left:756px;top:496px;width:54px;height:16px;background:#c4c4c4"></div>
<div style="position:absolute;left:757px;top:497px;width:14px;height:14px;background:#fff"></div>
<div style="position:absolute;left:772px;top:497px;width:21px;height:14px;background:#fff"></div>
<div style="position:absolute;left:794px;top:497px;width:15px;height:14px;background:#fff"></div>
<div style="position:absolute;left:758px;top:502px;width:11px;height:3px;background:#148a48"></div>
<div style="position:absolute;left:796px;top:502px;width:11px;height:3px;background:#148a48"></div>
<div style="position:absolute;left:800px;top:498px;width:3px;height:11px;background:#148a48"></div>
<div class="t" style="left:772px;top:498px;font-size:11px;line-height:13px;font-weight:700;color:#000;width:21px;text-align:center">0</div>
<div style="position:absolute;left:838px;top:497px;width:13px;height:13px;box-sizing:border-box;border:1.5px solid #1a4a82;background:linear-gradient(135deg,#e6e6e6,#fff 60%)"></div>
<svg class="a" style="left:840px;top:499px" width="9" height="9" viewBox="0 0 9 9"><path d="M1 4.2 L3.5 7 L8 1.5" fill="none" stroke="#1eab1e" stroke-width="2.2"/></svg>
<div class="t" style="left:301px;top:515px;font-size:11px;line-height:13px;font-weight:400;color:#000;">240</div>
<div class="t" style="left:323px;top:515px;font-size:11px;line-height:13px;font-weight:400;color:#000;letter-spacing:0.15px">Head Flying Hours</div>
<div class="t" style="left:453px;top:515px;font-size:11px;line-height:13px;font-weight:400;color:#000;">0</div>
<div class="t" style="left:489px;top:515px;font-size:11px;line-height:13px;font-weight:400;color:#000;">100</div>
<div class="t" style="left:525px;top:515px;font-size:11px;line-height:13px;font-weight:400;color:#000;">253</div>
<div class="t" style="left:561px;top:515px;font-size:11px;line-height:13px;font-weight:400;color:#000;">OK (Always...</div>
<div class="t" style="left:626px;top:515px;font-size:11px;line-height:13px;font-weight:700;color:#000;">9415000006DA</div>
<div style="position:absolute;left:756px;top:514px;width:54px;height:16px;background:#c4c4c4"></div>
<div style="position:absolute;left:757px;top:515px;width:14px;height:14px;background:#fff"></div>
<div style="position:absolute;left:772px;top:515px;width:21px;height:14px;background:#fff"></div>
<div style="position:absolute;left:794px;top:515px;width:15px;height:14px;background:#fff"></div>
<div style="position:absolute;left:758px;top:520px;width:11px;height:3px;background:#148a48"></div>
<div style="position:absolute;left:796px;top:520px;width:11px;height:3px;background:#148a48"></div>
<div style="position:absolute;left:800px;top:516px;width:3px;height:11px;background:#148a48"></div>
<div class="t" style="left:772px;top:516px;font-size:11px;line-height:13px;font-weight:700;color:#000;width:21px;text-align:center">0</div>
<div style="position:absolute;left:838px;top:515px;width:13px;height:13px;box-sizing:border-box;border:1.5px solid #1a4a82;background:linear-gradient(135deg,#e6e6e6,#fff 60%)"></div>
<svg class="a" style="left:840px;top:517px" width="9" height="9" viewBox="0 0 9 9"><path d="M1 4.2 L3.5 7 L8 1.5" fill="none" stroke="#1eab1e" stroke-width="2.2"/></svg>
<div class="t" style="left:301px;top:533px;font-size:11px;line-height:13px;font-weight:400;color:#000;">241</div>
<div class="t" style="left:323px;top:533px;font-size:11px;line-height:13px;font-weight:400;color:#000;letter-spacing:0.15px">Total LBA Written</div>
<div class="t" style="left:453px;top:533px;font-size:11px;line-height:13px;font-weight:400;color:#000;">0</div>
<div class="t" style="left:489px;top:533px;font-size:11px;line-height:13px;font-weight:400;color:#000;">100</div>
<div class="t" style="left:525px;top:533px;font-size:11px;line-height:13px;font-weight:400;color:#000;">253</div>
<div class="t" style="left:561px;top:533px;font-size:11px;line-height:13px;font-weight:400;color:#000;">OK (Always...</div>
<div class="t" style="left:626px;top:533px;font-size:11px;line-height:13px;font-weight:700;color:#000;">0001D164C140</div>
<div style="position:absolute;left:756px;top:532px;width:54px;height:16px;background:#c4c4c4"></div>
<div style="position:absolute;left:757px;top:533px;width:14px;height:14px;background:#fff"></div>
<div style="position:absolute;left:772px;top:533px;width:21px;height:14px;background:#fff"></div>
<div style="position:absolute;left:794px;top:533px;width:15px;height:14px;background:#fff"></div>
<div style="position:absolute;left:758px;top:538px;width:11px;height:3px;background:#148a48"></div>
<div style="position:absolute;left:796px;top:538px;width:11px;height:3px;background:#148a48"></div>
<div style="position:absolute;left:800px;top:534px;width:3px;height:11px;background:#148a48"></div>
<div class="t" style="left:772px;top:534px;font-size:11px;line-height:13px;font-weight:700;color:#000;width:21px;text-align:center">0</div>
<div style="position:absolute;left:838px;top:533px;width:13px;height:13px;box-sizing:border-box;border:1.5px solid #1a4a82;background:linear-gradient(135deg,#e6e6e6,#fff 60%)"></div>
<svg class="a" style="left:840px;top:535px" width="9" height="9" viewBox="0 0 9 9"><path d="M1 4.2 L3.5 7 L8 1.5" fill="none" stroke="#1eab1e" stroke-width="2.2"/></svg>
<div class="t" style="left:301px;top:551px;font-size:11px;line-height:13px;font-weight:400;color:#000;">242</div>
<div class="t" style="left:323px;top:551px;font-size:11px;line-height:13px;font-weight:400;color:#000;letter-spacing:0.15px">Total LBA Read</div>
<div class="t" style="left:453px;top:551px;font-size:11px;line-height:13px;font-weight:400;color:#000;">0</div>
<div class="t" style="left:489px;top:551px;font-size:11px;line-height:13px;font-weight:400;color:#000;">100</div>
<div class="t" style="left:525px;top:551px;font-size:11px;line-height:13px;font-weight:400;color:#000;">253</div>
<div class="t" style="left:561px;top:551px;font-size:11px;line-height:13px;font-weight:400;color:#000;">OK (Always...</div>
<div class="t" style="left:626px;top:551px;font-size:11px;line-height:13px;font-weight:700;color:#000;">000DD64D15C5</div>
<div style="position:absolute;left:756px;top:550px;width:54px;height:16px;background:#c4c4c4"></div>
<div style="position:absolute;left:757px;top:551px;width:14px;height:14px;background:#fff"></div>
<div style="position:absolute;left:772px;top:551px;width:21px;height:14px;background:#fff"></div>
<div style="position:absolute;left:794px;top:551px;width:15px;height:14px;background:#fff"></div>
<div style="position:absolute;left:758px;top:556px;width:11px;height:3px;background:#148a48"></div>
<div style="position:absolute;left:796px;top:556px;width:11px;height:3px;background:#148a48"></div>
<div style="position:absolute;left:800px;top:552px;width:3px;height:11px;background:#148a48"></div>
<div class="t" style="left:772px;top:552px;font-size:11px;line-height:13px;font-weight:700;color:#000;width:21px;text-align:center">0</div>
<div style="position:absolute;left:838px;top:551px;width:13px;height:13px;box-sizing:border-box;border:1.5px solid #1a4a82;background:linear-gradient(135deg,#e6e6e6,#fff 60%)"></div>
<svg class="a" style="left:840px;top:553px" width="9" height="9" viewBox="0 0 9 9"><path d="M1 4.2 L3.5 7 L8 1.5" fill="none" stroke="#1eab1e" stroke-width="2.2"/></svg>
<div style="position:absolute;left:269px;top:804px;width:1634px;height:4px;background:#f0f0f0"></div>
<div style="position:absolute;left:280px;top:830px;width:1622px;height:178px;background:#fff;box-sizing:border-box;border:1px solid #d9d9d9"></div>
<div style="position:absolute;left:280px;top:808px;width:121px;height:23px;background:#fff;box-sizing:border-box;border:1px solid #d9d9d9;border-bottom:none"></div>
<div class="t" style="left:288px;top:812px;font-size:11.1px;line-height:13px;font-weight:400;color:#000;">Raw Read Error Rate</div>
<svg class="a" style="left:0;top:0" width="1918" height="1080" viewBox="0 0 1918 1080">
<defs><linearGradient id="cg" x1="0" y1="0" x2="0" y2="1"><stop offset="0" stop-color="#ffffff"/><stop offset="1" stop-color="#bfbfbf"/></linearGradient></defs>
<rect x="285" y="835" width="1382" height="169" fill="url(#cg)"/>
<line x1="1666.5" y1="835" x2="1666.5" y2="1004" stroke="#7d7d7d" stroke-width="1"/>
<line x1="285" y1="1003.5" x2="1667" y2="1003.5" stroke="#a3a3a3" stroke-width="1"/>
<g stroke="#9a9a9a" stroke-width="1" stroke-dasharray="3 3"><line x1="407" y1="941.5" x2="1529" y2="941.5"/><line x1="407" y1="924.5" x2="1529" y2="924.5"/><line x1="407" y1="907.5" x2="1529" y2="907.5"/><line x1="407" y1="890.5" x2="1529" y2="890.5"/><line x1="407" y1="873.5" x2="1529" y2="873.5"/><line x1="407" y1="856.5" x2="1529" y2="856.5"/><line x1="409.5" y1="852" x2="409.5" y2="944"/><line x1="461.5" y1="852" x2="461.5" y2="944"/><line x1="482.5" y1="852" x2="482.5" y2="944"/><line x1="503.5" y1="852" x2="503.5" y2="944"/><line x1="529.5" y1="852" x2="529.5" y2="944"/><line x1="550.5" y1="852" x2="550.5" y2="944"/><line x1="571.5" y1="852" x2="571.5" y2="944"/><line x1="597.5" y1="852" x2="597.5" y2="944"/><line x1="618.5" y1="852" x2="618.5" y2="944"/><line x1="639.5" y1="852" x2="639.5" y2="944"/><line x1="665.5" y1="852" x2="665.5" y2="944"/><line x1="686.5" y1="852" x2="686.5" y2="944"/><line x1="707.5" y1="852" x2="707.5" y2="944"/><line x1="733.5" y1="852" x2="733.5" y2="944"/><line x1="754.5" y1="852" x2="754.5" y2="944"/><line x1="774.5" y1="852" x2="774.5" y2="944"/><line x1="800.5" y1="852" x2="800.5" y2="944"/><line x1="821.5" y1="852" x2="821.5" y2="944"/><line x1="842.5" y1="852" x2="842.5" y2="944"/><line x1="868.5" y1="852" x2="868.5" y2="944"/><line x1="889.5" y1="852" x2="889.5" y2="944"/><line x1="910.5" y1="852" x2="910.5" y2="944"/><line x1="936.5" y1="852" x2="936.5" y2="944"/><line x1="957.5" y1="852" x2="957.5" y2="944"/><line x1="978.5" y1="852" x2="978.5" y2="944"/><line x1="1004.5" y1="852" x2="1004.5" y2="944"/><line x1="1025.5" y1="852" x2="1025.5" y2="944"/><line x1="1046.5" y1="852" x2="1046.5" y2="944"/><line x1="1072.5" y1="852" x2="1072.5" y2="944"/><line x1="1093.5" y1="852" x2="1093.5" y2="944"/><line x1="1114.5" y1="852" x2="1114.5" y2="944"/><line x1="1140.5" y1="852" x2="1140.5" y2="944"/><line x1="1161.5" y1="852" x2="1161.5" y2="944"/><line x1="1182.5" y1="852" x2="1182.5" y2="944"/><line x1="1208.5" y1="852" x2="1208.5" y2="944"/><line x1="1229.5" y1="852" x2="1229.5" y2="944"/><line x1="1249.5" y1="852" x2="1249.5" y2="944"/><line x1="1286.5" y1="852" x2="1286.5" y2="944"/><line x1="1307.5" y1="852" x2="1307.5" y2="944"/><line x1="1328.5" y1="852" x2="1328.5" y2="944"/><line x1="1390.5" y1="852" x2="1390.5" y2="944"/><line x1="1411.5" y1="852" x2="1411.5" y2="944"/><line x1="1432.5" y1="852" x2="1432.5" y2="944"/><line x1="1458.5" y1="852" x2="1458.5" y2="944"/><line x1="1479.5" y1="852" x2="1479.5" y2="944"/><line x1="1500.5" y1="852" x2="1500.5" y2="944"/><line x1="1526.5" y1="852" x2="1526.5" y2="944"/></g>
<g stroke="#7a7a7a" stroke-width="1"><line x1="402" y1="941.5" x2="406" y2="941.5"/><line x1="402" y1="924.5" x2="406" y2="924.5"/><line x1="402" y1="907.5" x2="406" y2="907.5"/><line x1="402" y1="890.5" x2="406" y2="890.5"/><line x1="402" y1="873.5" x2="406" y2="873.5"/><line x1="402" y1="856.5" x2="406" y2="856.5"/><line x1="409.5" y1="944" x2="409.5" y2="948.5"/><line x1="461.5" y1="944" x2="461.5" y2="948.5"/><line x1="482.5" y1="944" x2="482.5" y2="948.5"/><line x1="503.5" y1="944" x2="503.5" y2="948.5"/><line x1="529.5" y1="944" x2="529.5" y2="948.5"/><line x1="550.5" y1="944" x2="550.5" y2="948.5"/><line x1="571.5" y1="944" x2="571.5" y2="948.5"/><line x1="597.5" y1="944" x2="597.5" y2="948.5"/><line x1="618.5" y1="944" x2="618.5" y2="948.5"/><line x1="639.5" y1="944" x2="639.5" y2="948.5"/><line x1="665.5" y1="944" x2="665.5" y2="948.5"/><line x1="686.5" y1="944" x2="686.5" y2="948.5"/><line x1="707.5" y1="944" x2="707.5" y2="948.5"/><line x1="733.5" y1="944" x2="733.5" y2="948.5"/><line x1="754.5" y1="944" x2="754.5" y2="948.5"/><line x1="774.5" y1="944" x2="774.5" y2="948.5"/><line x1="800.5" y1="944" x2="800.5" y2="948.5"/><line x1="821.5" y1="944" x2="821.5" y2="948.5"/><line x1="842.5" y1="944" x2="842.5" y2="948.5"/><line x1="868.5" y1="944" x2="868.5" y2="948.5"/><line x1="889.5" y1="944" x2="889.5" y2="948.5"/><line x1="910.5" y1="944" x2="910.5" y2="948.5"/><line x1="936.5" y1="944" x2="936.5" y2="948.5"/><line x1="957.5" y1="944" x2="957.5" y2="948.5"/><line x1="978.5" y1="944" x2="978.5" y2="948.5"/><line x1="1004.5" y1="944" x2="1004.5" y2="948.5"/><line x1="1025.5" y1="944" x2="1025.5" y2="948.5"/><line x1="1046.5" y1="944" x2="1046.5" y2="948.5"/><line x1="1072.5" y1="944" x2="1072.5" y2="948.5"/><line x1="1093.5" y1="944" x2="1093.5" y2="948.5"/><line x1="1114.5" y1="944" x2="1114.5" y2="948.5"/><line x1="1140.5" y1="944" x2="1140.5" y2="948.5"/><line x1="1161.5" y1="944" x2="1161.5" y2="948.5"/><line x1="1182.5" y1="944" x2="1182.5" y2="948.5"/><line x1="1208.5" y1="944" x2="1208.5" y2="948.5"/><line x1="1229.5" y1="944" x2="1229.5" y2="948.5"/><line x1="1249.5" y1="944" x2="1249.5" y2="948.5"/><line x1="1286.5" y1="944" x2="1286.5" y2="948.5"/><line x1="1307.5" y1="944" x2="1307.5" y2="948.5"/><line x1="1328.5" y1="944" x2="1328.5" y2="948.5"/><line x1="1390.5" y1="944" x2="1390.5" y2="948.5"/><line x1="1411.5" y1="944" x2="1411.5" y2="948.5"/><line x1="1432.5" y1="944" x2="1432.5" y2="948.5"/><line x1="1458.5" y1="944" x2="1458.5" y2="948.5"/><line x1="1479.5" y1="944" x2="1479.5" y2="948.5"/><line x1="1500.5" y1="944" x2="1500.5" y2="948.5"/><line x1="1526.5" y1="944" x2="1526.5" y2="948.5"/></g>
<rect x="406.5" y="851.5" width="1123" height="92.5" fill="none" stroke="#000" stroke-width="1.3"/>
<g font-family="Liberation Sans" font-size="10.6" fill="#000"><text x="401.5" y="945.3" text-anchor="end">0</text><text x="401.5" y="928.2" text-anchor="end">50 000 000</text><text x="401.5" y="911.2" text-anchor="end">100 000 000</text><text x="401.5" y="894.1" text-anchor="end">150 000 000</text><text x="401.5" y="877.1" text-anchor="end">200 000 000</text><text x="401.5" y="860.0" text-anchor="end">250 000 000</text></g>
<g font-family="Liberation Sans" font-size="10.6" fill="#000"><text x="413.2" y="949" text-anchor="end" transform="rotate(-90 413.2 949)">21.02.2017</text><text x="465.4" y="949" text-anchor="end" transform="rotate(-90 465.4 949)">03.03.2017</text><text x="486.3" y="949" text-anchor="end" transform="rotate(-90 486.3 949)">07.03.2017</text><text x="507.2" y="949" text-anchor="end" transform="rotate(-90 507.2 949)">11.03.2017</text><text x="533.3" y="949" text-anchor="end" transform="rotate(-90 533.3 949)">16.03.2017</text><text x="554.1" y="949" text-anchor="end" transform="rotate(-90 554.1 949)">20.03.2017</text><text x="575.0" y="949" text-anchor="end" transform="rotate(-90 575.0 949)">24.03.2017</text><text x="601.1" y="949" text-anchor="end" transform="rotate(-90 601.1 949)">29.03.2017</text><text x="622.0" y="949" text-anchor="end" transform="rotate(-90 622.0 949)">02.04.2017</text><text x="642.9" y="949" text-anchor="end" transform="rotate(-90 642.9 949)">06.04.2017</text><text x="669.0" y="949" text-anchor="end" transform="rotate(-90 669.0 949)">11.04.2017</text><text x="689.9" y="949" text-anchor="end" transform="rotate(-90 689.9 949)">15.04.2017</text><text x="710.7" y="949" text-anchor="end" transform="rotate(-90 710.7 949)">19.04.2017</text><text x="736.8" y="949" text-anchor="end" transform="rotate(-90 736.8 949)">24.04.2017</text><text x="757.7" y="949" text-anchor="end" transform="rotate(-90 757.7 949)">28.04.2017</text><text x="778.6" y="949" text-anchor="end" transform="rotate(-90 778.6 949)">02.05.2017</text><text x="804.7" y="949" text-anchor="end" transform="rotate(-90 804.7 949)">07.05.2017</text><text x="825.6" y="949" text-anchor="end" transform="rotate(-90 825.6 949)">11.05.2017</text><text x="846.5" y="949" text-anchor="end" transform="rotate(-90 846.5 949)">15.05.2017</text><text x="872.6" y="949" text-anchor="end" transform="rotate(-90 872.6 949)">20.05.2017</text><text x="893.4" y="949" text-anchor="end" transform="rotate(-90 893.4 949)">24.05.2017</text><text x="914.3" y="949" text-anchor="end" transform="rotate(-90 914.3 949)">28.05.2017</text><text x="940.4" y="949" text-anchor="end" transform="rotate(-90 940.4 949)">02.06.2017</text><text x="961.3" y="949" text-anchor="end" transform="rotate(-90 961.3 949)">06.06.2017</text><text x="982.2" y="949" text-anchor="end" transform="rotate(-90 982.2 949)">10.06.2017</text><text x="1008.3" y="949" text-anchor="end" transform="rotate(-90 1008.3 949)">15.06.2017</text><text x="1029.2" y="949" text-anchor="end" transform="rotate(-90 1029.2 949)">19.06.2017</text><text x="1050.0" y="949" text-anchor="end" transform="rotate(-90 1050.0 949)">23.06.2017</text><text x="1076.1" y="949" text-anchor="end" transform="rotate(-90 1076.1 949)">28.06.2017</text><text x="1097.0" y="949" text-anchor="end" transform="rotate(-90 1097.0 949)">02.07.2017</text><text x="1117.9" y="949" text-anchor="end" transform="rotate(-90 1117.9 949)">06.07.2017</text><text x="1144.0" y="949" text-anchor="end" transform="rotate(-90 1144.0 949)">11.07.2017</text><text x="1164.9" y="949" text-anchor="end" transform="rotate(-90 1164.9 949)">15.07.2017</text><text x="1185.8" y="949" text-anchor="end" transform="rotate(-90 1185.8 949)">19.07.2017</text><text x="1211.9" y="949" text-anchor="end" transform="rotate(-90 1211.9 949)">24.07.2017</text><text x="1232.7" y="949" text-anchor="end" transform="rotate(-90 1232.7 949)">28.07.2017</text><text x="1253.6" y="949" text-anchor="end" transform="rotate(-90 1253.6 949)">01.08.2017</text><text x="1290.2" y="949" text-anchor="end" transform="rotate(-90 1290.2 949)">08.08.2017</text><text x="1311.0" y="949" text-anchor="end" transform="rotate(-90 1311.0 949)">12.08.2017</text><text x="1331.9" y="949" text-anchor="end" transform="rotate(-90 1331.9 949)">16.08.2017</text><text x="1394.6" y="949" text-anchor="end" transform="rotate(-90 1394.6 949)">28.08.2017</text><text x="1415.4" y="949" text-anchor="end" transform="rotate(-90 1415.4 949)">01.09.2017</text><text x="1436.3" y="949" text-anchor="end" transform="rotate(-90 1436.3 949)">05.09.2017</text><text x="1462.4" y="949" text-anchor="end" transform="rotate(-90 1462.4 949)">10.09.2017</text><text x="1483.3" y="949" text-anchor="end" transform="rotate(-90 1483.3 949)">14.09.2017</text><text x="1504.2" y="949" text-anchor="end" transform="rotate(-90 1504.2 949)">18.09.2017</text><text x="1530.3" y="949" text-anchor="end" transform="rotate(-90 1530.3 949)">23.09.2017</text></g>
<polyline points="409.0,932.0 461.2,930.6 482.1,923.1 503.0,917.5 529.1,915.6 549.9,913.0 570.8,905.2 596.9,879.4 617.8,937.2 638.7,918.1 664.8,885.0 685.7,914.4 706.5,862.5 732.6,933.4 753.5,925.1 774.4,923.9 800.5,921.7 821.4,919.7 842.3,917.9 868.4,912.5 889.2,910.8 910.1,909.4 936.2,905.7 957.1,900.4 978.0,878.6 1004.1,924.5 1025.0,881.3 1045.8,921.2 1071.9,877.8 1092.8,904.6 1113.7,931.8 1139.8,919.3 1160.7,928.7 1181.6,870.9 1207.7,859.9 1228.5,926.1 1249.4,925.1 1286.0,897.4 1306.8,858.8 1327.7,885.1 1390.4,902.5 1411.2,895.0 1432.1,929.3 1458.2,929.0 1479.1,899.8 1500.0,910.7 1526.1,927.5" fill="none" stroke="#0000ff" stroke-width="2" stroke-linejoin="round"/>
<g fill="#0000ff" stroke="#000" stroke-width="1"><circle cx="409.0" cy="932.0" r="1.8"/><circle cx="461.2" cy="930.6" r="1.8"/><circle cx="482.1" cy="923.1" r="1.8"/><circle cx="503.0" cy="917.5" r="1.8"/><circle cx="529.1" cy="915.6" r="1.8"/><circle cx="549.9" cy="913.0" r="1.8"/><circle cx="570.8" cy="905.2" r="1.8"/><circle cx="596.9" cy="879.4" r="1.8"/><circle cx="617.8" cy="937.2" r="1.8"/><circle cx="638.7" cy="918.1" r="1.8"/><circle cx="664.8" cy="885.0" r="1.8"/><circle cx="685.7" cy="914.4" r="1.8"/><circle cx="706.5" cy="862.5" r="1.8"/><circle cx="732.6" cy="933.4" r="1.8"/><circle cx="753.5" cy="925.1" r="1.8"/><circle cx="774.4" cy="923.9" r="1.8"/><circle cx="800.5" cy="921.7" r="1.8"/><circle cx="821.4" cy="919.7" r="1.8"/><circle cx="842.3" cy="917.9" r="1.8"/><circle cx="868.4" cy="912.5" r="1.8"/><circle cx="889.2" cy="910.8" r="1.8"/><circle cx="910.1" cy="909.4" r="1.8"/><circle cx="936.2" cy="905.7" r="1.8"/><circle cx="957.1" cy="900.4" r="1.8"/><circle cx="978.0" cy="878.6" r="1.8"/><circle cx="1004.1" cy="924.5" r="1.8"/><circle cx="1025.0" cy="881.3" r="1.8"/><circle cx="1045.8" cy="921.2" r="1.8"/><circle cx="1071.9" cy="877.8" r="1.8"/><circle cx="1092.8" cy="904.6" r="1.8"/><circle cx="1113.7" cy="931.8" r="1.8"/><circle cx="1139.8" cy="919.3" r="1.8"/><circle cx="1160.7" cy="928.7" r="1.8"/><circle cx="1181.6" cy="870.9" r="1.8"/><circle cx="1207.7" cy="859.9" r="1.8"/><circle cx="1228.5" cy="926.1" r="1.8"/><circle cx="1249.4" cy="925.1" r="1.8"/><circle cx="1286.0" cy="897.4" r="1.8"/><circle cx="1306.8" cy="858.8" r="1.8"/><circle cx="1327.7" cy="885.1" r="1.8"/><circle cx="1390.4" cy="902.5" r="1.8"/><circle cx="1411.2" cy="895.0" r="1.8"/><circle cx="1432.1" cy="929.3" r="1.8"/><circle cx="1458.2" cy="929.0" r="1.8"/><circle cx="1479.1" cy="899.8" r="1.8"/><circle cx="1500.0" cy="910.7" r="1.8"/><circle cx="1526.1" cy="927.5" r="1.8"/></g>
<rect x="376" y="912" width="66" height="15" fill="#fff"/><path d="M376 912.5H442 M376 927.5H442 M376.5 912V928 M442.5 912V928" stroke="#000" stroke-width="1" stroke-dasharray="1 1" fill="none"/><text x="409.0" y="924.0" text-anchor="middle" font-family="Liberation Sans" font-size="10.5">27 797 688</text><rect x="428" y="911" width="66" height="15" fill="#fff"/><path d="M428 911.5H494 M428 926.5H494 M428.5 911V927 M494.5 911V927" stroke="#000" stroke-width="1" stroke-dasharray="1 1" fill="none"/><text x="461.0" y="923.0" text-anchor="middle" font-family="Liberation Sans" font-size="10.5">32 064 064</text><rect x="449" y="903" width="66" height="15" fill="#fff"/><path d="M449 903.5H515 M449 918.5H515 M449.5 903V919 M515.5 903V919" stroke="#000" stroke-width="1" stroke-dasharray="1 1" fill="none"/><text x="482.0" y="915.0" text-anchor="middle" font-family="Liberation Sans" font-size="10.5">54 000 000</text><rect x="470" y="898" width="66" height="15" fill="#fff"/><path d="M470 898.5H536 M470 913.5H536 M470.5 898V914 M536.5 898V914" stroke="#000" stroke-width="1" stroke-dasharray="1 1" fill="none"/><text x="503.0" y="910.0" text-anchor="middle" font-family="Liberation Sans" font-size="10.5">70 200 000</text><rect x="496" y="896" width="66" height="15" fill="#fff"/><path d="M496 896.5H562 M496 911.5H562 M496.5 896V912 M562.5 896V912" stroke="#000" stroke-width="1" stroke-dasharray="1 1" fill="none"/><text x="529.0" y="908.0" text-anchor="middle" font-family="Liberation Sans" font-size="10.5">76 000 000</text><rect x="517" y="893" width="66" height="15" fill="#fff"/><path d="M517 893.5H583 M517 908.5H583 M517.5 893V909 M583.5 893V909" stroke="#000" stroke-width="1" stroke-dasharray="1 1" fill="none"/><text x="550.0" y="905.0" text-anchor="middle" font-family="Liberation Sans" font-size="10.5">83 667 432</text><rect x="535" y="886" width="71" height="15" fill="#fff"/><path d="M535 886.5H606 M535 901.5H606 M535.5 886V902 M606.5 886V902" stroke="#000" stroke-width="1" stroke-dasharray="1 1" fill="none"/><text x="570.5" y="898.0" text-anchor="middle" font-family="Liberation Sans" font-size="10.5">106 517 248</text><rect x="561" y="860" width="71" height="15" fill="#fff"/><path d="M561 860.5H632 M561 875.5H632 M561.5 860V876 M632.5 860V876" stroke="#000" stroke-width="1" stroke-dasharray="1 1" fill="none"/><text x="596.5" y="872.0" text-anchor="middle" font-family="Liberation Sans" font-size="10.5">182 064 520</text><rect x="585" y="918" width="66" height="15" fill="#fff"/><path d="M585 918.5H651 M585 933.5H651 M585.5 918V934 M651.5 918V934" stroke="#000" stroke-width="1" stroke-dasharray="1 1" fill="none"/><text x="618.0" y="930.0" text-anchor="middle" font-family="Liberation Sans" font-size="10.5">12 681 888</text><rect x="606" y="898" width="66" height="15" fill="#fff"/><path d="M606 898.5H672 M606 913.5H672 M606.5 898V914 M672.5 898V914" stroke="#000" stroke-width="1" stroke-dasharray="1 1" fill="none"/><text x="639.0" y="910.0" text-anchor="middle" font-family="Liberation Sans" font-size="10.5">68 659 520</text><rect x="629" y="865" width="71" height="15" fill="#fff"/><path d="M629 865.5H700 M629 880.5H700 M629.5 865V881 M700.5 865V881" stroke="#000" stroke-width="1" stroke-dasharray="1 1" fill="none"/><text x="664.5" y="877.0" text-anchor="middle" font-family="Liberation Sans" font-size="10.5">165 498 912</text><rect x="653" y="895" width="66" height="15" fill="#fff"/><path d="M653 895.5H719 M653 910.5H719 M653.5 895V911 M719.5 895V911" stroke="#000" stroke-width="1" stroke-dasharray="1 1" fill="none"/><text x="686.0" y="907.0" text-anchor="middle" font-family="Liberation Sans" font-size="10.5">79 486 176</text><rect x="671" y="843" width="71" height="15" fill="#fff"/><path d="M671 843.5H742 M671 858.5H742 M671.5 843V859 M742.5 843V859" stroke="#000" stroke-width="1" stroke-dasharray="1 1" fill="none"/><text x="706.5" y="855.0" text-anchor="middle" font-family="Liberation Sans" font-size="10.5">231 623 368</text><rect x="700" y="914" width="66" height="15" fill="#fff"/><path d="M700 914.5H766 M700 929.5H766 M700.5 914V930 M766.5 914V930" stroke="#000" stroke-width="1" stroke-dasharray="1 1" fill="none"/><text x="733.0" y="926.0" text-anchor="middle" font-family="Liberation Sans" font-size="10.5">23 676 864</text><rect x="721" y="906" width="66" height="15" fill="#fff"/><path d="M721 906.5H787 M721 921.5H787 M721.5 906V922 M787.5 906V922" stroke="#000" stroke-width="1" stroke-dasharray="1 1" fill="none"/><text x="754.0" y="918.0" text-anchor="middle" font-family="Liberation Sans" font-size="10.5">48 000 000</text><rect x="741" y="904" width="66" height="15" fill="#fff"/><path d="M741 904.5H807 M741 919.5H807 M741.5 904V920 M807.5 904V920" stroke="#000" stroke-width="1" stroke-dasharray="1 1" fill="none"/><text x="774.0" y="916.0" text-anchor="middle" font-family="Liberation Sans" font-size="10.5">51 600 000</text><rect x="768" y="902" width="66" height="15" fill="#fff"/><path d="M768 902.5H834 M768 917.5H834 M768.5 902V918 M834.5 902V918" stroke="#000" stroke-width="1" stroke-dasharray="1 1" fill="none"/><text x="801.0" y="914.0" text-anchor="middle" font-family="Liberation Sans" font-size="10.5">58 000 000</text><rect x="788" y="900" width="66" height="15" fill="#fff"/><path d="M788 900.5H854 M788 915.5H854 M788.5 900V916 M854.5 900V916" stroke="#000" stroke-width="1" stroke-dasharray="1 1" fill="none"/><text x="821.0" y="912.0" text-anchor="middle" font-family="Liberation Sans" font-size="10.5">64 000 000</text><rect x="809" y="898" width="66" height="15" fill="#fff"/><path d="M809 898.5H875 M809 913.5H875 M809.5 898V914 M875.5 898V914" stroke="#000" stroke-width="1" stroke-dasharray="1 1" fill="none"/><text x="842.0" y="910.0" text-anchor="middle" font-family="Liberation Sans" font-size="10.5">69 200 000</text><rect x="835" y="893" width="66" height="15" fill="#fff"/><path d="M835 893.5H901 M835 908.5H901 M835.5 893V909 M901.5 893V909" stroke="#000" stroke-width="1" stroke-dasharray="1 1" fill="none"/><text x="868.0" y="905.0" text-anchor="middle" font-family="Liberation Sans" font-size="10.5">85 000 000</text><rect x="856" y="891" width="66" height="15" fill="#fff"/><path d="M856 891.5H922 M856 906.5H922 M856.5 891V907 M922.5 891V907" stroke="#000" stroke-width="1" stroke-dasharray="1 1" fill="none"/><text x="889.0" y="903.0" text-anchor="middle" font-family="Liberation Sans" font-size="10.5">90 000 000</text><rect x="877" y="890" width="66" height="15" fill="#fff"/><path d="M877 890.5H943 M877 905.5H943 M877.5 890V906 M943.5 890V906" stroke="#000" stroke-width="1" stroke-dasharray="1 1" fill="none"/><text x="910.0" y="902.0" text-anchor="middle" font-family="Liberation Sans" font-size="10.5">94 000 000</text><rect x="901" y="886" width="71" height="15" fill="#fff"/><path d="M901 886.5H972 M901 901.5H972 M901.5 886V902 M972.5 886V902" stroke="#000" stroke-width="1" stroke-dasharray="1 1" fill="none"/><text x="936.5" y="898.0" text-anchor="middle" font-family="Liberation Sans" font-size="10.5">105 000 000</text><rect x="922" y="881" width="71" height="15" fill="#fff"/><path d="M922 881.5H993 M922 896.5H993 M922.5 881V897 M993.5 881V897" stroke="#000" stroke-width="1" stroke-dasharray="1 1" fill="none"/><text x="957.5" y="893.0" text-anchor="middle" font-family="Liberation Sans" font-size="10.5">120 569 304</text><rect x="942" y="859" width="71" height="15" fill="#fff"/><path d="M942 859.5H1013 M942 874.5H1013 M942.5 859V875 M1013.5 859V875" stroke="#000" stroke-width="1" stroke-dasharray="1 1" fill="none"/><text x="977.5" y="871.0" text-anchor="middle" font-family="Liberation Sans" font-size="10.5">184 230 000</text><rect x="971" y="905" width="66" height="15" fill="#fff"/><path d="M971 905.5H1037 M971 920.5H1037 M971.5 905V921 M1037.5 905V921" stroke="#000" stroke-width="1" stroke-dasharray="1 1" fill="none"/><text x="1004.0" y="917.0" text-anchor="middle" font-family="Liberation Sans" font-size="10.5">49 725 000</text><rect x="989" y="862" width="71" height="15" fill="#fff"/><path d="M989 862.5H1060 M989 877.5H1060 M989.5 862V878 M1060.5 862V878" stroke="#000" stroke-width="1" stroke-dasharray="1 1" fill="none"/><text x="1024.5" y="874.0" text-anchor="middle" font-family="Liberation Sans" font-size="10.5">176 486 000</text><rect x="1013" y="902" width="66" height="15" fill="#fff"/><path d="M1013 902.5H1079 M1013 917.5H1079 M1013.5 902V918 M1079.5 902V918" stroke="#000" stroke-width="1" stroke-dasharray="1 1" fill="none"/><text x="1046.0" y="914.0" text-anchor="middle" font-family="Liberation Sans" font-size="10.5">59 518 704</text><rect x="1036" y="858" width="71" height="15" fill="#fff"/><path d="M1036 858.5H1107 M1036 873.5H1107 M1036.5 858V874 M1107.5 858V874" stroke="#000" stroke-width="1" stroke-dasharray="1 1" fill="none"/><text x="1071.5" y="870.0" text-anchor="middle" font-family="Liberation Sans" font-size="10.5">186 561 120</text><rect x="1057" y="885" width="71" height="15" fill="#fff"/><path d="M1057 885.5H1128 M1057 900.5H1128 M1057.5 885V901 M1128.5 885V901" stroke="#000" stroke-width="1" stroke-dasharray="1 1" fill="none"/><text x="1092.5" y="897.0" text-anchor="middle" font-family="Liberation Sans" font-size="10.5">108 273 960</text><rect x="1081" y="912" width="66" height="15" fill="#fff"/><path d="M1081 912.5H1147 M1081 927.5H1147 M1081.5 912V928 M1147.5 912V928" stroke="#000" stroke-width="1" stroke-dasharray="1 1" fill="none"/><text x="1114.0" y="924.0" text-anchor="middle" font-family="Liberation Sans" font-size="10.5">28 283 200</text><rect x="1107" y="900" width="66" height="15" fill="#fff"/><path d="M1107 900.5H1173 M1107 915.5H1173 M1107.5 900V916 M1173.5 900V916" stroke="#000" stroke-width="1" stroke-dasharray="1 1" fill="none"/><text x="1140.0" y="912.0" text-anchor="middle" font-family="Liberation Sans" font-size="10.5">64 961 448</text><rect x="1128" y="909" width="66" height="15" fill="#fff"/><path d="M1128 909.5H1194 M1128 924.5H1194 M1128.5 909V925 M1194.5 909V925" stroke="#000" stroke-width="1" stroke-dasharray="1 1" fill="none"/><text x="1161.0" y="921.0" text-anchor="middle" font-family="Liberation Sans" font-size="10.5">37 464 408</text><rect x="1146" y="851" width="71" height="15" fill="#fff"/><path d="M1146 851.5H1217 M1146 866.5H1217 M1146.5 851V867 M1217.5 851V867" stroke="#000" stroke-width="1" stroke-dasharray="1 1" fill="none"/><text x="1181.5" y="863.0" text-anchor="middle" font-family="Liberation Sans" font-size="10.5">207 035 800</text><rect x="1172" y="840" width="71" height="15" fill="#fff"/><path d="M1172 840.5H1243 M1172 855.5H1243 M1172.5 840V856 M1243.5 840V856" stroke="#000" stroke-width="1" stroke-dasharray="1 1" fill="none"/><text x="1207.5" y="852.0" text-anchor="middle" font-family="Liberation Sans" font-size="10.5">239 022 856</text><rect x="1196" y="907" width="66" height="15" fill="#fff"/><path d="M1196 907.5H1262 M1196 922.5H1262 M1196.5 907V923 M1262.5 907V923" stroke="#000" stroke-width="1" stroke-dasharray="1 1" fill="none"/><text x="1229.0" y="919.0" text-anchor="middle" font-family="Liberation Sans" font-size="10.5">45 000 000</text><rect x="1216" y="905" width="66" height="15" fill="#fff"/><path d="M1216 905.5H1282 M1216 920.5H1282 M1216.5 905V921 M1282.5 905V921" stroke="#000" stroke-width="1" stroke-dasharray="1 1" fill="none"/><text x="1249.0" y="917.0" text-anchor="middle" font-family="Liberation Sans" font-size="10.5">48 127 368</text><rect x="1250" y="878" width="71" height="15" fill="#fff"/><path d="M1250 878.5H1321 M1250 893.5H1321 M1250.5 878V894 M1321.5 878V894" stroke="#000" stroke-width="1" stroke-dasharray="1 1" fill="none"/><text x="1285.5" y="890.0" text-anchor="middle" font-family="Liberation Sans" font-size="10.5">129 244 984</text><rect x="1271" y="839" width="71" height="15" fill="#fff"/><path d="M1271 839.5H1342 M1271 854.5H1342 M1271.5 839V855 M1342.5 839V855" stroke="#000" stroke-width="1" stroke-dasharray="1 1" fill="none"/><text x="1306.5" y="851.0" text-anchor="middle" font-family="Liberation Sans" font-size="10.5">242 248 152</text><rect x="1292" y="866" width="71" height="15" fill="#fff"/><path d="M1292 866.5H1363 M1292 881.5H1363 M1292.5 866V882 M1363.5 866V882" stroke="#000" stroke-width="1" stroke-dasharray="1 1" fill="none"/><text x="1327.5" y="878.0" text-anchor="middle" font-family="Liberation Sans" font-size="10.5">165 298 136</text><rect x="1355" y="883" width="71" height="15" fill="#fff"/><path d="M1355 883.5H1426 M1355 898.5H1426 M1355.5 883V899 M1426.5 883V899" stroke="#000" stroke-width="1" stroke-dasharray="1 1" fill="none"/><text x="1390.5" y="895.0" text-anchor="middle" font-family="Liberation Sans" font-size="10.5">114 156 176</text><rect x="1376" y="875" width="71" height="15" fill="#fff"/><path d="M1376 875.5H1447 M1376 890.5H1447 M1376.5 875V891 M1447.5 875V891" stroke="#000" stroke-width="1" stroke-dasharray="1 1" fill="none"/><text x="1411.5" y="887.0" text-anchor="middle" font-family="Liberation Sans" font-size="10.5">136 364 456</text><rect x="1399" y="910" width="66" height="15" fill="#fff"/><path d="M1399 910.5H1465 M1399 925.5H1465 M1399.5 910V926 M1465.5 910V926" stroke="#000" stroke-width="1" stroke-dasharray="1 1" fill="none"/><text x="1432.0" y="922.0" text-anchor="middle" font-family="Liberation Sans" font-size="10.5">35 900 000</text><rect x="1425" y="909" width="66" height="15" fill="#fff"/><path d="M1425 909.5H1491 M1425 924.5H1491 M1425.5 909V925 M1491.5 909V925" stroke="#000" stroke-width="1" stroke-dasharray="1 1" fill="none"/><text x="1458.0" y="921.0" text-anchor="middle" font-family="Liberation Sans" font-size="10.5">36 514 352</text><rect x="1444" y="880" width="71" height="15" fill="#fff"/><path d="M1444 880.5H1515 M1444 895.5H1515 M1444.5 880V896 M1515.5 880V896" stroke="#000" stroke-width="1" stroke-dasharray="1 1" fill="none"/><text x="1479.5" y="892.0" text-anchor="middle" font-family="Liberation Sans" font-size="10.5">122 122 096</text><rect x="1467" y="891" width="66" height="15" fill="#fff"/><path d="M1467 891.5H1533 M1467 906.5H1533 M1467.5 891V907 M1533.5 891V907" stroke="#000" stroke-width="1" stroke-dasharray="1 1" fill="none"/><text x="1500.0" y="903.0" text-anchor="middle" font-family="Liberation Sans" font-size="10.5">90 299 472</text><rect x="1493" y="908" width="66" height="15" fill="#fff"/><path d="M1493 908.5H1559 M1493 923.5H1559 M1493.5 908V924 M1559.5 908V924" stroke="#000" stroke-width="1" stroke-dasharray="1 1" fill="none"/><text x="1526.0" y="920.0" text-anchor="middle" font-family="Liberation Sans" font-size="10.5">41 121 648</text>
</svg>
<div class="t" style="left:1674px;top:843px;font-size:11.1px;line-height:13px;font-weight:400;color:#000;">Flags</div>
<div class="t" style="left:1674px;top:859px;font-size:11.5px;line-height:13px;font-weight:700;color:#000;">Error-Rate, Performance, Statistical,</div>
<div class="t" style="left:1674px;top:874px;font-size:11.5px;line-height:13px;font-weight:700;color:#000;">Critical</div>
<div style="position:absolute;left:1674px;top:916px;width:13px;height:13px;box-sizing:border-box;border:1px solid #333;background:#fff"></div>
<svg class="a" style="left:1676px;top:918px" width="10" height="10" viewBox="0 0 10 10"><path d="M1 5 L3.8 8 L9 1.5" fill="none" stroke="#222" stroke-width="1.1"/></svg>
<div class="t" style="left:1690px;top:916px;font-size:11.3px;line-height:13px;font-weight:400;color:#000;">Show values</div>
<div class="t" style="left:1674px;top:960px;font-size:11.8px;line-height:13px;font-weight:400;color:#000;">Attribute graph</div>
<div style="position:absolute;left:1674px;top:975px;width:217px;height:23px;box-sizing:border-box;border:1px solid #adadad;background:#e1e1e1"></div>
<div class="t" style="left:1678px;top:980px;font-size:11.5px;line-height:13px;font-weight:400;color:#000;">Display data field</div>
<svg class="a" style="left:1876px;top:982px" width="12" height="8" viewBox="0 0 12 8"><polyline points="1.5,1.5 6,6 10.5,1.5" fill="none" stroke="#333" stroke-width="1.1"/></svg>
<div style="position:absolute;left:0px;top:1039px;width:1918px;height:1px;background:#fafafa"></div>
<div style="position:absolute;left:0px;top:1040px;width:1918px;height:40px;background:#0e1014"></div>
<svg class="a" style="left:0;top:1040px" width="1918" height="40" viewBox="0 0 1918 40">
<g transform="translate(0,-1)">
<g fill="#fff"><path d="M16 13 L23 12 L23 19 L16 19 Z"/><path d="M24 11.8 L32 10.5 L32 19 L24 19 Z"/><path d="M16 20 L23 20 L23 27 L16 26 Z"/><path d="M24 20 L32 20 L32 28.5 L24 27.2 Z"/></g>
<circle cx="74" cy="18" r="6" fill="none" stroke="#fff" stroke-width="1.4"/><line x1="69.5" y1="22.5" x2="64" y2="28" stroke="#fff" stroke-width="1.6"/>
<rect x="112" y="12" width="16" height="15" fill="none" stroke="#fff" stroke-width="1.3"/><path d="M109.5 14 L109.5 25 M130.5 14 L130.5 25" stroke="#fff" stroke-width="1.2"/>
<rect x="159.5" y="9" width="23" height="23" rx="1.5" fill="#2a3fae"/><rect x="163" y="19" width="16" height="12" fill="#f4c6d0"/><g stroke="#d04060" stroke-width="0.9"><line x1="163" y1="22" x2="179" y2="22"/><line x1="163" y1="25" x2="179" y2="25"/><line x1="163" y1="28" x2="179" y2="28"/></g><rect x="166" y="9" width="10" height="7" fill="#c8c8d8"/><rect x="172" y="10" width="2.5" height="5" fill="#333"/>
<rect x="208" y="9" width="24" height="24" rx="2" fill="#0e6fd6"/><circle cx="220" cy="21" r="9" fill="#fff"/><circle cx="220" cy="21" r="7.5" fill="#0e6fd6"/><path d="M213 21 L217 17.5 L217 19.8 L223 19.8 L223 17.5 L227 21 L223 24.5 L223 22.2 L217 22.2 L217 24.5 Z" fill="#fff"/>
<path d="M257 12 L265 12 L267 14 L281 14 L281 31 L257 31 Z" fill="#f2c94c"/><rect x="257" y="16" width="24" height="15" fill="#f7d978"/><path d="M265 31 L265 24 L273 24 L273 31" fill="none" stroke="#2a9be0" stroke-width="3"/>
<path d="M307 14 L311 12 L318 19 L327 10 L330 11.5 L330 30 L327 32 L318 23 L311 30 L307 28 Z M311 16.5 L311 25.5 L315 21 Z M326.5 15.5 L321 21 L326.5 26.5 Z" fill="#7b3fb8" fill-rule="evenodd"/>
<path d="M355 15 L367 10 L379 15 L379 32 L355 32 Z" fill="#fff"/><path d="M355 15 L367 22 L379 15" fill="none" stroke="#0e1014" stroke-width="1.4"/><path d="M361 26 L371 19 L366 27 Z" fill="#0e1014"/>
<circle cx="415.5" cy="21" r="11" fill="#db4437"/><path d="M415.5 21 L425 15.5 A11 11 0 0 1 421 30.5 Z" fill="#f4c20d"/><path d="M415.5 21 L421 30.5 A11 11 0 0 1 406 15.5 Z" fill="#0f9d58"/><circle cx="415.5" cy="21" r="5" fill="#fff"/><circle cx="415.5" cy="21" r="3.8" fill="#4285f4"/>
<rect x="454" y="11" width="20" height="21" fill="#8ab8d8"/><circle cx="463" cy="21.5" r="7" fill="#f08a20"/><path d="M460.5 17.5 L467.5 21.5 L460.5 25.5 Z" fill="#fff"/>
<rect x="503" y="10" width="20" height="20" fill="#001d26" stroke="#31c5f0" stroke-width="1.6"/><text x="513" y="25" font-family="Liberation Sans" font-size="11" font-weight="bold" fill="#31c5f0" text-anchor="middle">Ps</text>
<g fill="#fff"><path d="M556 24 L563 21 L563 12.5 L556 16.5 Z"/><path d="M565.5 12 L565.5 21 L573 24.5 L573 15.5 Z" opacity="0.85"/><path d="M557 26 L564 22.5 L572 26 L564.5 30.5 Z"/></g><path d="M564 21.5 L564 12 M564 21.5 L556 25.5 M564 21.5 L572.5 25.5" stroke="#0e1014" stroke-width="1.4"/>
<circle cx="611" cy="21" r="11" fill="#2ea6de"/><path d="M604 21 L618 15 L615.5 27 L611.5 24 L609 26 L609 22.5 L616 17 L607.5 22 Z" fill="#fff"/><rect x="608" y="25" width="16" height="11" rx="2.5" fill="#e02a2a"/><text x="616" y="34" font-family="Liberation Sans" font-size="8.5" fill="#fff" text-anchor="middle">125</text>
<rect x="641" y="1" width="40" height="40" fill="#5e5a1e"/><defs><linearGradient id="stg" x1="0" y1="0" x2="0" y2="1"><stop offset="0" stop-color="#0b1f4a"/><stop offset="1" stop-color="#2a7ac0"/></linearGradient></defs><circle cx="660.5" cy="19.5" r="11" fill="url(#stg)"/><circle cx="664.5" cy="16.5" r="4" fill="none" stroke="#e8e8e0" stroke-width="1.8"/><circle cx="664.5" cy="16.5" r="1.6" fill="#e8e8e0"/><path d="M650 20.5 Q654 20 658 23.5 L662 19 L664 21 L659 27 Q655 28 650 24 Z" fill="#e8e8e0"/><circle cx="657" cy="25" r="1.8" fill="none" stroke="#1a3a6a" stroke-width="0.8"/>
<g><path d="M699 13 L718 12 L721 15 L702 16 Z" fill="#d070e0"/><rect x="702" y="16" width="19" height="5" fill="#9a30b8"/><path d="M699 13 L702 16 L702 21 L699 18 Z" fill="#eee"/><rect x="702" y="21.5" width="19" height="5" fill="#2040e0"/><path d="M699 18.5 L702 21.5 L702 26.5 L699 23.5 Z" fill="#eee"/><rect x="702" y="27" width="19" height="5" fill="#20c030"/><path d="M699 24 L702 27 L702 32 L699 29 Z" fill="#eee"/><rect x="710" y="12.5" width="3" height="19.5" fill="#c89a40"/><rect x="709" y="19" width="5" height="4" fill="#444"/></g>
<defs><linearGradient id="npg" x1="0" y1="0" x2="1" y2="1"><stop offset="0" stop-color="#e8fbff"/><stop offset="1" stop-color="#5ab0c8"/></linearGradient></defs><path d="M753 10 L767 9.5 L768.5 29 L755 31.5 L747 25 Z" fill="url(#npg)" stroke="#88c8d8" stroke-width="0.6"/><path d="M767 9.5 L769.5 11 L770 28 L768.5 29 Z" fill="#c8a040"/>
<circle cx="808" cy="21" r="6" fill="none" stroke="#fff" stroke-width="3.4" stroke-dasharray="2.4 2.3"/><circle cx="808" cy="21" r="5.2" fill="none" stroke="#fff" stroke-width="2"/>
<path d="M856 10 Q867 10 867 20 Q867 29 857 29 L852 32 L852 28.5 Q845 27 845 20 Q845 10 856 10 Z" fill="#7d5ed8"/><path d="M851 16 Q852 24 860 25 L861 23 L858.5 21.5 L857.5 22.5 Q854.5 21 853.5 18 L854.5 17 L853 14.5 Z" fill="#fff"/><rect x="855" y="24" width="15" height="12" rx="3" fill="#e23a3a"/><text x="862.5" y="33.5" font-family="Liberation Sans" font-size="9.5" fill="#fff" text-anchor="middle">13</text>
<circle cx="905" cy="21" r="9" fill="none" stroke="#1a5a8a" stroke-width="2.4" stroke-dasharray="3 2"/><path d="M910 15 Q900 14 900 21 Q900 28 910 27 M900 21 L908 21" fill="none" stroke="#1e6ea8" stroke-width="2.2"/>
<circle cx="954" cy="20" r="10" fill="#fff"/><circle cx="954" cy="20" r="8.3" fill="#2cb742"/><path d="M945 30 L947 25 L950 27 Z" fill="#fff"/><circle cx="961.5" cy="27.5" r="6.5" fill="#e01010"/><text x="961.5" y="31.5" font-family="Liberation Sans" font-size="10" fill="#fff" text-anchor="middle">1</text>
<rect x="993" y="11" width="21" height="16" fill="#d0d8e0" stroke="#888" stroke-width="0.8"/><rect x="995" y="13" width="17" height="12" fill="#e8f0f8"/><path d="M996 21 L999 21 L1001 16 L1003 23 L1005 18 L1007 21 L1011 21" fill="none" stroke="#3a7ac8" stroke-width="0.9"/><ellipse cx="1003" cy="30.5" rx="6" ry="2.2" fill="#c8c8c8"/><rect x="990" y="15" width="4" height="12" fill="#aab"/>
<path d="M1041 13 L1047 13 L1047 22 L1055 13 L1063 13 L1054 23 L1049 28 L1047 29 L1047 33 L1041 33 Z" fill="#e2252c"/><path d="M1052 24 L1057 24 L1064 31 L1064 33 L1057 33 L1057 31 L1061 31 Z" fill="#fff" stroke="#fff" stroke-width="0.5"/>
<rect x="1078" y="1" width="48" height="40" fill="#3b3d42"/>
<defs><linearGradient id="hdsg" x1="1" y1="0" x2="0" y2="1"><stop offset="0" stop-color="#f01818"/><stop offset="0.5" stop-color="#ffffff"/><stop offset="1" stop-color="#18d018"/></linearGradient></defs><rect x="1090" y="8" width="24" height="24" fill="url(#hdsg)"/><g transform="translate(1090 8) scale(1.5)"><path d="M0.5 7 L6 5 L12 5.5 L16 8 L16 10.5 L9 14 L6 13.5 L0.5 9.5 Z" fill="#d0d0d0"/><path d="M9 14 L16 10.5 L16 8 L12 10 L8.5 11 Z" fill="#3a3a3a"/><circle cx="14.5" cy="9.3" r="1" fill="#b0b0f0"/><g fill="#555"><circle cx="2" cy="8.5" r="0.8"/><circle cx="4" cy="7" r="0.7"/><circle cx="6" cy="12" r="0.8"/><circle cx="7.5" cy="6" r="0.6"/><circle cx="9" cy="12.5" r="0.9"/><circle cx="11" cy="6.5" r="0.6"/></g></g>
</g>
<rect x="249" y="38" width="40" height="2" fill="#76b9ed"/>
<rect x="347" y="38" width="40" height="2" fill="#76b9ed"/>
<rect x="395" y="38" width="40" height="2" fill="#76b9ed"/>
<rect x="445" y="38" width="40" height="2" fill="#76b9ed"/>
<rect x="592" y="38" width="40" height="2" fill="#76b9ed"/>
<rect x="690" y="38" width="40" height="2" fill="#76b9ed"/>
<rect x="739" y="38" width="40" height="2" fill="#76b9ed"/>
<rect x="788" y="38" width="40" height="2" fill="#76b9ed"/>
<rect x="837" y="38" width="40" height="2" fill="#76b9ed"/>
<rect x="886" y="38" width="40" height="2" fill="#76b9ed"/>
<rect x="935" y="38" width="40" height="2" fill="#76b9ed"/>
<rect x="984" y="38" width="40" height="2" fill="#76b9ed"/>
<rect x="1033" y="38" width="40" height="2" fill="#76b9ed"/>
<rect x="1078" y="38" width="47" height="2" fill="#76b9ed"/>
<rect x="641" y="38" width="40" height="2" fill="#e8e010"/>
<polyline points="1579.5,23 1585,17.5 1590.5,23" fill="none" stroke="#fff" stroke-width="1.3"/>
<rect x="1603" y="13" width="11" height="13" fill="#bbb"/><rect x="1604" y="14" width="9" height="7" fill="#333"/><rect x="1603" y="22" width="11" height="4" fill="#4ab0f0"/>
<circle cx="1632" cy="20.5" r="7" fill="#2a8ae0"/><rect x="1631" y="20" width="9" height="8" rx="1.5" fill="#e03a2a"/>
<rect x="1650" y="13" width="14" height="10" fill="none" stroke="#fff" stroke-width="1.2"/><path d="M1657 23 L1657 27 M1652 27 L1662 27" stroke="#fff" stroke-width="1.2"/><rect x="1648" y="11" width="4" height="4" fill="none" stroke="#fff" stroke-width="0.9"/>
<path d="M1673 17 L1676 17 L1680 13 L1680 28 L1676 24 L1673 24 Z" fill="none" stroke="#fff" stroke-width="1.1"/><path d="M1682.5 17.5 Q1684.5 20.5 1682.5 23.5 M1685 15 Q1688 20.5 1685 26 M1687.5 12.5 Q1691.5 20.5 1687.5 28.5" fill="none" stroke="#fff" stroke-width="1.1"/>
<ellipse cx="1704.5" cy="20.5" rx="7" ry="4.5" fill="#1a2a4a"/><circle cx="1704.5" cy="20.5" r="3" fill="#fff"/><circle cx="1704.5" cy="20.5" r="1.8" fill="#e01818"/>
<path d="M1723 14 L1727 14 L1727 21 L1732 14 L1736 14 L1730 21 L1727 25 L1723 25 Z" fill="#e2252c"/><rect x="1730" y="21" width="5" height="5" fill="none" stroke="#fff" stroke-width="0.9"/>
<circle cx="1753" cy="20.5" r="7.5" fill="#3a8ef0"/><circle cx="1753" cy="20.5" r="4" fill="none" stroke="#cfe4ff" stroke-width="1.6"/>
<text x="1782.5" y="24" font-family="Liberation Sans" font-size="11.5" fill="#fff" text-anchor="middle">РУС</text>
<text x="1833.5" y="15" font-family="Liberation Sans" font-size="11.5" fill="#fff" text-anchor="middle">0:00</text>
<text x="1833.5" y="32.5" font-family="Liberation Sans" font-size="11.5" fill="#fff" text-anchor="middle">23.09.2017</text>
<path d="M1880 13 L1895 13 L1895 24 L1887 24 L1883 28 L1883 24 L1880 24 Z" fill="#fff"/><g stroke="#0e1014" stroke-width="1"><line x1="1883" y1="16.5" x2="1892" y2="16.5"/><line x1="1883" y1="19" x2="1892" y2="19"/></g>
<circle cx="1894" cy="27" r="6" fill="#3a3a3a" stroke="#888" stroke-width="1"/><text x="1894" y="30.5" font-family="Liberation Sans" font-size="9.5" font-weight="bold" fill="#fff" text-anchor="middle">1</text>
<rect x="1914" y="0" width="1" height="40" fill="#555"/>
</svg>
</body></html>
